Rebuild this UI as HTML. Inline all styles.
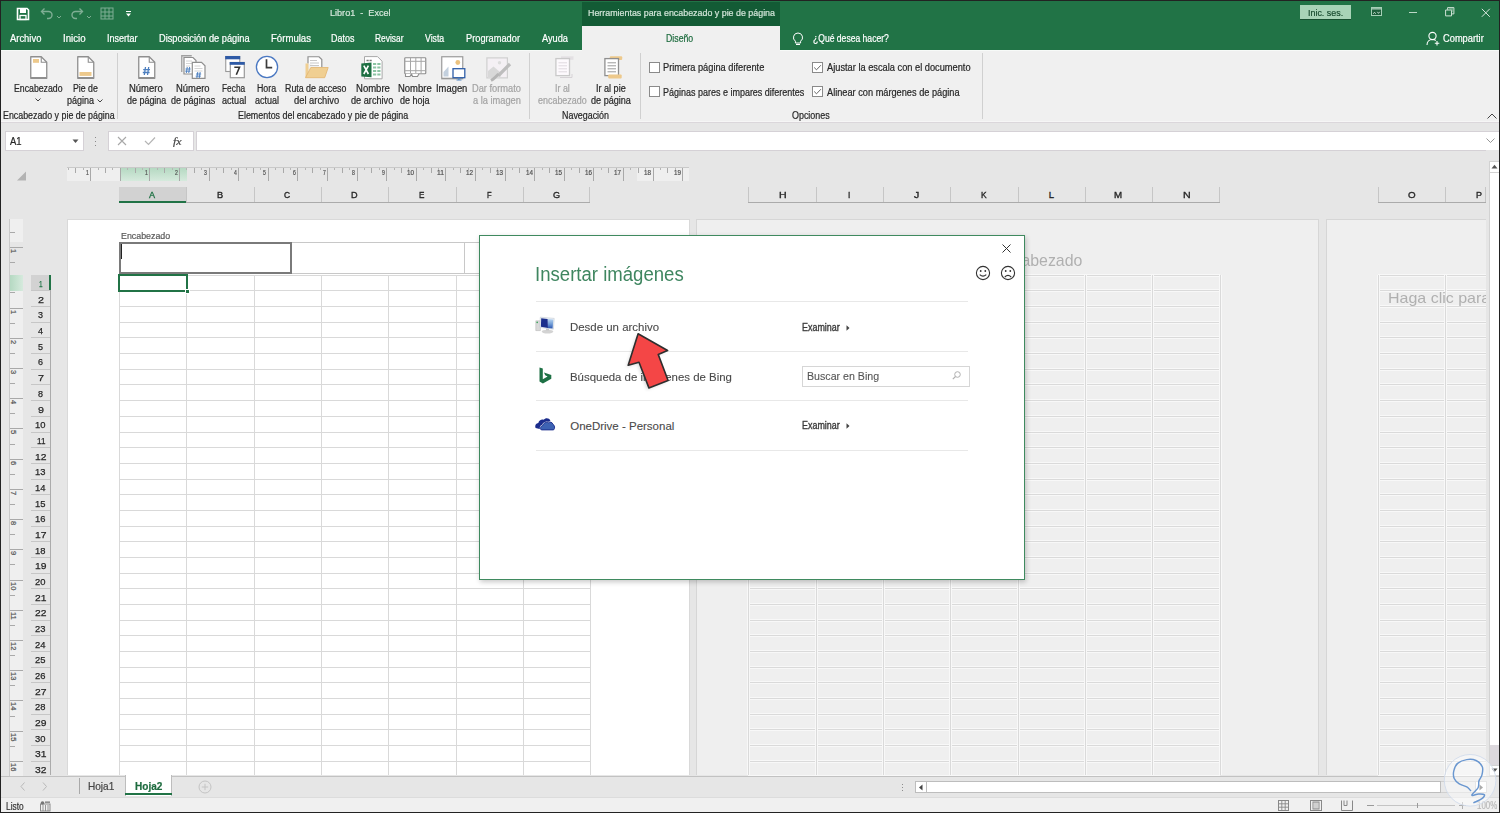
<!DOCTYPE html>
<html><head><meta charset="utf-8">
<style>

*{margin:0;padding:0;box-sizing:border-box}
html,body{width:1500px;height:813px;overflow:hidden;background:#e6e6e6}
#root{position:relative;width:1500px;height:813px;overflow:hidden;background:#e6e6e6;font-family:"Liberation Sans",sans-serif}
.a{position:absolute}
.t{position:absolute;white-space:nowrap;line-height:1;-webkit-text-stroke-width:0.2px}
svg.s{position:absolute;overflow:visible}

</style></head><body><div id="root">
<div class="a" style="left:0px;top:0px;width:1500px;height:50px;background:#217346;"></div>
<div class="a" style="left:582px;top:0px;width:198px;height:26px;background:#135b35;"></div>
<div class="a" style="left:582px;top:1px;width:198px;height:1px;background:#217346;"></div>
<div class="t" style="left:587.50px;top:8.20px;font-size:9.8px;color:#d3e6da;transform:scaleX(0.9059);transform-origin:0 0;">Herramientas para encabezado y pie de página</div>
<div class="t" style="left:329.60px;top:8.20px;font-size:9.8px;color:#d6e7dc;transform:scaleX(0.9269);transform-origin:0 0;white-space:pre;">Libro1  -  Excel</div>
<svg class="s" style="left:16px;top:7px;" width="14" height="14" viewBox="0 0 14 14"><path d="M1.5 1.5h9.5l1.5 1.5v9.5h-11z" fill="none" stroke="#fff" stroke-width="1.6"/><rect x="4" y="2" width="6" height="4" fill="#fff"/><rect x="4" y="8.5" width="6" height="4" fill="none" stroke="#fff" stroke-width="1.3"/></svg>
<svg class="s" style="left:40px;top:7px;" width="22" height="12" viewBox="0 0 22 12"><path d="M2 4.5h6.5a3.5 3.5 0 0 1 0 7H7" fill="none" stroke="#7fae94" stroke-width="1.4"/><path d="M4.5 1.5L1.5 4.5l3 3" fill="none" stroke="#7fae94" stroke-width="1.4"/><path d="M17 9l2 2 2-2" fill="none" stroke="#7fae94" stroke-width="1"/></svg>
<svg class="s" style="left:70px;top:7px;" width="22" height="12" viewBox="0 0 22 12"><path d="M12 4.5H5.5a3.5 3.5 0 0 0 0 7H7" fill="none" stroke="#7fae94" stroke-width="1.4"/><path d="M9.5 1.5l3 3-3 3" fill="none" stroke="#7fae94" stroke-width="1.4"/><path d="M17 9l2 2 2-2" fill="none" stroke="#7fae94" stroke-width="1"/></svg>
<svg class="s" style="left:100px;top:7px;" width="14" height="14" viewBox="0 0 14 14"><rect x="1" y="1" width="12" height="11" fill="none" stroke="#7fae94" stroke-width="1"/><path d="M1 5h12M1 9h12M5 1v11M9 1v11" stroke="#7fae94" stroke-width="1"/></svg>
<svg class="s" style="left:125px;top:10px;" width="8" height="8" viewBox="0 0 8 8"><rect x="1" y="1" width="5" height="1" fill="#fff"/><path d="M1 3.5h5l-2.5 3z" fill="#fff"/></svg>
<div class="a" style="left:1300px;top:5px;width:51px;height:14.5px;background:#a8d3b7;border-bottom:1px solid #184f30;"></div>
<div class="t" style="left:1308.00px;top:7.90px;font-size:9.8px;color:#174a2e;transform:scaleX(0.9095);transform-origin:0 0;">Inic. ses.</div>
<svg class="s" style="left:1371px;top:7px;" width="12" height="10" viewBox="0 0 12 10"><rect x="0.5" y="0.5" width="10" height="8" fill="#1d5e3a" stroke="#a6cfb6"/><rect x="1" y="1" width="9" height="1.6" fill="#96bfa8"/><path d="M2.3 6.8l1.2-1.6 1.2 1.6M6.3 4.8l1.2 1.6 1.2-1.6" fill="none" stroke="#c9e0d2" stroke-width="0.9"/></svg>
<div class="a" style="left:1409px;top:11.5px;width:8px;height:1.3px;background:#bcd8c7;"></div>
<svg class="s" style="left:1444.5px;top:7px;" width="10" height="10" viewBox="0 0 10 10"><path d="M0.6 3v5.9h5.9V3z" fill="none" stroke="#cfe2d6" stroke-width="1"/><path d="M2.6 2.8V0.6h6.3v6.3H6.6" fill="none" stroke="#cfe2d6" stroke-width="1"/><path d="M3.5 1l5 0 0 5z" fill="#8fbfa4" opacity="0.6"/></svg>
<svg class="s" style="left:1480.5px;top:7.5px;" width="10" height="10" viewBox="0 0 10 10"><path d="M0.8 0.8l8 8M8.8 0.8l-8 8" stroke="#d6e6dc" stroke-width="1"/></svg>
<div class="t" style="left:10.10px;top:33.64px;font-size:10px;color:#ffffff;transform:scaleX(0.9413);transform-origin:0 0;">Archivo</div>
<div class="t" style="left:63.00px;top:33.64px;font-size:10px;color:#ffffff;transform:scaleX(0.9671);transform-origin:0 0;">Inicio</div>
<div class="t" style="left:107.00px;top:33.64px;font-size:10px;color:#ffffff;transform:scaleX(0.8967);transform-origin:0 0;">Insertar</div>
<div class="t" style="left:159.00px;top:33.64px;font-size:10px;color:#ffffff;transform:scaleX(0.9259);transform-origin:0 0;">Disposición de página</div>
<div class="t" style="left:271.00px;top:33.64px;font-size:10px;color:#ffffff;transform:scaleX(0.9598);transform-origin:0 0;">Fórmulas</div>
<div class="t" style="left:330.60px;top:33.64px;font-size:10px;color:#ffffff;transform:scaleX(0.8958);transform-origin:0 0;">Datos</div>
<div class="t" style="left:375.00px;top:33.64px;font-size:10px;color:#ffffff;transform:scaleX(0.8390);transform-origin:0 0;">Revisar</div>
<div class="t" style="left:425.00px;top:33.64px;font-size:10px;color:#ffffff;transform:scaleX(0.8715);transform-origin:0 0;">Vista</div>
<div class="t" style="left:466.00px;top:33.64px;font-size:10px;color:#ffffff;transform:scaleX(0.9250);transform-origin:0 0;">Programador</div>
<div class="t" style="left:541.60px;top:33.64px;font-size:10px;color:#ffffff;transform:scaleX(0.9227);transform-origin:0 0;">Ayuda</div>
<div class="a" style="left:582px;top:26px;width:198px;height:25px;background:#f0f0f0;"></div>
<div class="t" style="left:666.40px;top:33.64px;font-size:10px;color:#1c6b3d;transform:scaleX(0.8743);transform-origin:0 0;">Diseño</div>
<svg class="s" style="left:792px;top:32px;" width="12" height="14" viewBox="0 0 12 14"><path d="M6 1a4.5 4.5 0 0 0-2.6 8.2V11h5.2V9.2A4.5 4.5 0 0 0 6 1z" fill="none" stroke="#fff" stroke-width="1"/><path d="M4 12.5h4" stroke="#fff"/></svg>
<div class="t" style="left:812.50px;top:33.64px;font-size:10px;color:#ffffff;transform:scaleX(0.8578);transform-origin:0 0;">¿Qué desea hacer?</div>
<svg class="s" style="left:1426px;top:31px;" width="14" height="15" viewBox="0 0 14 15"><circle cx="6.5" cy="5" r="3.6" fill="none" stroke="#fff" stroke-width="1.1"/><path d="M1 14c0-3.5 2.5-5.5 5.5-5.5 1.5 0 2.5.4 3.3 1" fill="none" stroke="#fff" stroke-width="1.1"/><path d="M11 10v4.5M8.8 12.2h4.5" stroke="#fff" stroke-width="1.1"/></svg>
<div class="t" style="left:1442.60px;top:33.73px;font-size:10px;color:#ffffff;transform:scaleX(0.9290);transform-origin:0 0;">Compartir</div>
<div class="a" style="left:0px;top:50px;width:1500px;height:72px;background:#f0f0f0;"></div>
<div class="a" style="left:0px;top:50px;width:582px;height:1px;background:#f7faf8;"></div>
<div class="a" style="left:780px;top:50px;width:720px;height:1px;background:#f7faf8;"></div>
<div class="a" style="left:0px;top:121px;width:1500px;height:1px;background:#f6f6f6;"></div>
<div class="a" style="left:0px;top:122px;width:1500px;height:1px;background:#dbd7db;"></div>
<div class="t" style="left:13.60px;top:83.73px;font-size:10px;color:#262626;transform:scaleX(0.8726);transform-origin:0 0;">Encabezado</div>
<svg class="s" style="left:35px;top:98px;" width="6" height="4" viewBox="0 0 6 4"><path d="M0.5 0.5l2.5 2.5 2.5-2.5" fill="none" stroke="#444" stroke-width="1"/></svg>
<div class="t" style="left:72.80px;top:83.73px;font-size:10px;color:#262626;transform:scaleX(0.8752);transform-origin:0 0;">Pie de</div>
<div class="t" style="left:67.00px;top:96.23px;font-size:10px;color:#262626;transform:scaleX(0.9026);transform-origin:0 0;">página</div>
<svg class="s" style="left:97px;top:99px;" width="6" height="4" viewBox="0 0 6 4"><path d="M0.5 0.5l2.5 2.5 2.5-2.5" fill="none" stroke="#444" stroke-width="1"/></svg>
<div class="t" style="left:3.00px;top:111.33px;font-size:10px;color:#262626;transform:scaleX(0.8843);transform-origin:0 0;">Encabezado y pie de página</div>
<div class="a" style="left:117px;top:53px;width:1px;height:66px;background:#d0d0d0;"></div>
<div class="t" style="left:129.30px;top:83.73px;font-size:10px;color:#262626;transform:scaleX(0.9471);transform-origin:0 0;">Número</div>
<div class="t" style="left:126.50px;top:96.23px;font-size:10px;color:#262626;transform:scaleX(0.8948);transform-origin:0 0;">de página</div>
<div class="t" style="left:176.40px;top:83.73px;font-size:10px;color:#262626;transform:scaleX(0.9443);transform-origin:0 0;">Número</div>
<div class="t" style="left:171.00px;top:96.23px;font-size:10px;color:#262626;transform:scaleX(0.9033);transform-origin:0 0;">de páginas</div>
<div class="t" style="left:222.00px;top:83.73px;font-size:10px;color:#262626;transform:scaleX(0.8324);transform-origin:0 0;">Fecha</div>
<div class="t" style="left:222.00px;top:96.23px;font-size:10px;color:#262626;transform:scaleX(0.9069);transform-origin:0 0;">actual</div>
<div class="t" style="left:257.20px;top:83.73px;font-size:10px;color:#262626;transform:scaleX(0.8818);transform-origin:0 0;">Hora</div>
<div class="t" style="left:255.20px;top:96.23px;font-size:10px;color:#262626;transform:scaleX(0.8994);transform-origin:0 0;">actual</div>
<div class="t" style="left:285.10px;top:83.73px;font-size:10px;color:#262626;transform:scaleX(0.8838);transform-origin:0 0;">Ruta de acceso</div>
<div class="t" style="left:293.60px;top:96.23px;font-size:10px;color:#262626;transform:scaleX(0.9345);transform-origin:0 0;">del archivo</div>
<div class="t" style="left:355.70px;top:83.73px;font-size:10px;color:#262626;transform:scaleX(0.9526);transform-origin:0 0;">Nombre</div>
<div class="t" style="left:350.90px;top:96.23px;font-size:10px;color:#262626;transform:scaleX(0.9168);transform-origin:0 0;">de archivo</div>
<div class="t" style="left:397.90px;top:83.73px;font-size:10px;color:#262626;transform:scaleX(0.9471);transform-origin:0 0;">Nombre</div>
<div class="t" style="left:400.20px;top:96.23px;font-size:10px;color:#262626;transform:scaleX(0.9024);transform-origin:0 0;">de hoja</div>
<div class="t" style="left:436.20px;top:83.73px;font-size:10px;color:#262626;transform:scaleX(0.9392);transform-origin:0 0;">Imagen</div>
<div class="t" style="left:471.80px;top:83.73px;font-size:10px;color:#a3a3a3;transform:scaleX(0.9280);transform-origin:0 0;">Dar formato</div>
<div class="t" style="left:472.80px;top:96.23px;font-size:10px;color:#a3a3a3;transform:scaleX(0.9269);transform-origin:0 0;">a la imagen</div>
<div class="t" style="left:238.40px;top:111.33px;font-size:10px;color:#262626;transform:scaleX(0.8900);transform-origin:0 0;">Elementos del encabezado y pie de página</div>
<div class="a" style="left:529px;top:53px;width:1px;height:66px;background:#d0d0d0;"></div>
<div class="t" style="left:555.40px;top:83.73px;font-size:10px;color:#a3a3a3;transform:scaleX(0.8876);transform-origin:0 0;">Ir al</div>
<div class="t" style="left:537.80px;top:96.23px;font-size:10px;color:#a3a3a3;transform:scaleX(0.8939);transform-origin:0 0;">encabezado</div>
<div class="t" style="left:596.40px;top:83.73px;font-size:10px;color:#262626;transform:scaleX(0.9058);transform-origin:0 0;">Ir al pie</div>
<div class="t" style="left:591.30px;top:96.23px;font-size:10px;color:#262626;transform:scaleX(0.9083);transform-origin:0 0;">de página</div>
<div class="t" style="left:561.70px;top:111.33px;font-size:10px;color:#262626;transform:scaleX(0.8899);transform-origin:0 0;">Navegación</div>
<div class="a" style="left:639.5px;top:53px;width:1px;height:66px;background:#d0d0d0;"></div>
<svg class="s" style="left:649px;top:62px;" width="11" height="11" viewBox="0 0 11 11"><rect x="0.5" y="0.5" width="10" height="10" fill="#fff" stroke="#8a8a8a"/></svg>
<svg class="s" style="left:649px;top:86px;" width="11" height="11" viewBox="0 0 11 11"><rect x="0.5" y="0.5" width="10" height="10" fill="#fff" stroke="#8a8a8a"/></svg>
<svg class="s" style="left:812px;top:62px;" width="11" height="11" viewBox="0 0 11 11"><rect x="0.5" y="0.5" width="10" height="10" fill="#fff" stroke="#8a8a8a"/><path d="M2.2 5.5l2.3 2.3 4.4-4.6" fill="none" stroke="#555" stroke-width="0.9"/></svg>
<svg class="s" style="left:812px;top:86px;" width="11" height="11" viewBox="0 0 11 11"><rect x="0.5" y="0.5" width="10" height="10" fill="#fff" stroke="#8a8a8a"/><path d="M2.2 5.5l2.3 2.3 4.4-4.6" fill="none" stroke="#555" stroke-width="0.9"/></svg>
<div class="t" style="left:663.40px;top:63.44px;font-size:10px;color:#262626;transform:scaleX(0.9250);transform-origin:0 0;">Primera página diferente</div>
<div class="t" style="left:663.40px;top:87.63px;font-size:10px;color:#262626;transform:scaleX(0.8982);transform-origin:0 0;">Páginas pares e impares diferentes</div>
<div class="t" style="left:826.70px;top:63.44px;font-size:10px;color:#262626;transform:scaleX(0.9259);transform-origin:0 0;">Ajustar la escala con el documento</div>
<div class="t" style="left:826.70px;top:87.83px;font-size:10px;color:#262626;transform:scaleX(0.9209);transform-origin:0 0;">Alinear con márgenes de página</div>
<div class="t" style="left:791.90px;top:111.33px;font-size:10px;color:#262626;transform:scaleX(0.8924);transform-origin:0 0;">Opciones</div>
<div class="a" style="left:982px;top:53px;width:1px;height:66px;background:#d0d0d0;"></div>
<svg class="s" style="left:1487px;top:113px;" width="10" height="6" viewBox="0 0 10 6"><path d="M0.5 5.5l4.5-4.5 4.5 4.5" fill="none" stroke="#444" stroke-width="1"/></svg>
<svg class="s" style="left:30px;top:56px;" width="18" height="23" viewBox="0 0 18 23"><path d="M0.75 0.75h10.5l5.5 5.5v16.0h-16z" fill="#fff" stroke="#8f8f8f" stroke-width="1.3" stroke-linejoin="round"/><path d="M11.25 0.75v5.5h5.5" fill="none" stroke="#8f8f8f" stroke-width="1.1"/><rect x="1" y="21" width="15.5" height="1.2" fill="#8f8f8f"/><rect x="3" y="3" width="6" height="3.8" fill="#edc98c"/></svg>
<svg class="s" style="left:76.5px;top:56px;" width="18" height="23" viewBox="0 0 18 23"><path d="M0.75 0.75h10.5l5.5 5.5v16.0h-16z" fill="#fff" stroke="#8f8f8f" stroke-width="1.3" stroke-linejoin="round"/><path d="M11.25 0.75v5.5h5.5" fill="none" stroke="#8f8f8f" stroke-width="1.1"/><rect x="1" y="21" width="15.5" height="1.2" fill="#8f8f8f"/><rect x="2.5" y="16" width="12" height="3.9" fill="#edc98c"/></svg>
<svg class="s" style="left:137.5px;top:56px;" width="18" height="23" viewBox="0 0 18 23"><path d="M0.75 0.75h10.5l5.5 5.5v16.0h-16z" fill="#fff" stroke="#8f8f8f" stroke-width="1.3" stroke-linejoin="round"/><path d="M11.25 0.75v5.5h5.5" fill="none" stroke="#8f8f8f" stroke-width="1.1"/><rect x="1" y="21" width="15.5" height="1.2" fill="#8f8f8f"/><g transform="translate(8.5 15) scale(1.0)" stroke="#4d7fbf" stroke-width="1.3" fill="none"><path d="M-1 -4L-2.2 4M2.2 -4L1 4M-3.3 -1.3H3.5M-3.7 1.5H3.1"/></g></svg>
<svg class="s" style="left:181px;top:55px;" width="25" height="24" viewBox="0 0 25 24"><path d="M0.75 17V0.75h10" fill="none" stroke="#a0a0a0" stroke-width="1.3"/>
<path d="M3 2.5h9l3 3v13.5h-12z" fill="#fff" stroke="#8f8f8f" stroke-width="1.2"/>
<path d="M5 6h6M5 8.5h6M5 11h4" stroke="#c9c9c9" stroke-width="0.8"/><g transform="translate(7 15) scale(0.75)" stroke="#4d7fbf" stroke-width="1.3" fill="none"><path d="M-1 -4L-2.2 4M2.2 -4L1 4M-3.3 -1.3H3.5M-3.7 1.5H3.1"/></g>
<path d="M11.3 7.3h9.2l3.5 3.5v12.5h-12.7z" fill="#fff" stroke="#8f8f8f" stroke-width="1.2"/>
<path d="M13.5 11h6M13.5 13.5h8M13.5 16h8" stroke="#c9c9c9" stroke-width="0.8"/><g transform="translate(17.5 20) scale(0.75)" stroke="#4d7fbf" stroke-width="1.3" fill="none"><path d="M-1 -4L-2.2 4M2.2 -4L1 4M-3.3 -1.3H3.5M-3.7 1.5H3.1"/></g></svg>
<svg class="s" style="left:224.5px;top:56px;" width="20" height="22.5" viewBox="0 0 20 22.5"><rect x="0.75" y="0.5" width="14" height="15" fill="#fff" stroke="#9a9a9a" stroke-width="1.1"/><rect x="0.2" y="0" width="15" height="3.3" fill="#2e5aa6"/>
<rect x="5.3" y="6.5" width="14" height="15.2" fill="#fff" stroke="#9a9a9a" stroke-width="1.2"/><rect x="4.7" y="6" width="15" height="2.8" fill="#2e5aa6"/>
<path d="M9.3 11.3h5.2l-3.2 7.5" fill="none" stroke="#333" stroke-width="1.6"/></svg>
<svg class="s" style="left:255px;top:55px;" width="24" height="24" viewBox="0 0 24 24"><circle cx="12" cy="12" r="10.6" fill="#fff" stroke="#4a78c2" stroke-width="1.3"/><path d="M11.5 4.3v8.4h5.7" fill="none" stroke="#3c3c3c" stroke-width="1.7"/></svg>
<svg class="s" style="left:305px;top:55.5px;" width="24" height="23" viewBox="0 0 24 23"><path d="M3 7.5V0.75h11l2.8 2.8V11" fill="#fff" stroke="#8f8f8f" stroke-width="1.2"/>
<path d="M5 4.5h7M5 7h9M5 9.5h9" stroke="#c8c8c8" stroke-width="1"/>
<path d="M0.5 7.5h3v14H0.5z" fill="#f0cf92"/>
<path d="M5.8 11.5H23.2L19.7 21.7H0.5z" fill="#f0cf92" stroke="#e2b46f" stroke-width="0.8"/></svg>
<svg class="s" style="left:360.5px;top:55.5px;" width="22" height="24" viewBox="0 0 22 24"><path d="M3.5 0.6h13l4.6 4.6v17.6H3.5z" fill="#fff" stroke="#a8a8a8" stroke-width="1"/>
<path d="M5.5 4.5h2.2M8.5 4.5h2.2" stroke="#777" stroke-width="1.3"/>
<g fill="#8cc4a3"><rect x="12" y="7" width="3.2" height="2"/><rect x="16.3" y="7" width="3.2" height="2"/><rect x="12" y="10.5" width="3.2" height="2"/><rect x="16.3" y="10.5" width="3.2" height="2"/><rect x="12" y="14" width="3.2" height="2"/><rect x="16.3" y="14" width="3.2" height="2"/><rect x="12" y="17.5" width="3.2" height="2"/><rect x="16.3" y="17.5" width="3.2" height="2"/></g>
<path d="M0.3 7.6L10.5 6.5v14.8L0.3 20.5z" fill="#1d6f42"/>
<path d="M2.8 9.7l4.6 8.3M7.4 9.7l-4.6 8.3" stroke="#fff" stroke-width="1.6"/></svg>
<svg class="s" style="left:403.5px;top:56.5px;" width="23" height="21" viewBox="0 0 23 21"><rect x="0.75" y="0.75" width="21" height="16" fill="#fff" stroke="#8f8f8f" stroke-width="1.2" rx="0.8"/>
<path d="M0.75 4.3h21M0.75 13.7h21M6.5 0.75v16M11.8 0.75v16M17.1 0.75v16" stroke="#a6a6a6" stroke-width="1"/>
<path d="M1.5 16.7v2.8h4.5l1.5-2.8M7.5 16.7l1 2.8h5l1.5-2.8" fill="#fff" stroke="#8f8f8f" stroke-width="1.1"/></svg>
<svg class="s" style="left:440.5px;top:55.5px;" width="25" height="26" viewBox="0 0 25 26"><rect x="0.75" y="0.75" width="21" height="22" fill="#fff" stroke="#9a9a9a" stroke-width="1.2"/><rect x="1" y="21.7" width="21" height="1.3" fill="#999"/>
<circle cx="16.8" cy="6.5" r="2.4" fill="#ebc27f"/>
<path d="M2.5 20.5V16l5-5.5 0 10z" fill="#c3d0de"/>
<rect x="12" y="12.7" width="11.8" height="9" fill="#fff" stroke="#2f5ea8" stroke-width="1.3"/>
<path d="M17.9 21.7v2M15.5 24h5" stroke="#4f86c6" stroke-width="1.2"/></svg>
<svg class="s" style="left:485.5px;top:56.5px;" width="25" height="25" viewBox="0 0 25 25"><rect x="0.9" y="0.9" width="20.5" height="20" fill="#f4f0f4" stroke="#cfcfcf" stroke-width="1.2"/>
<circle cx="13.5" cy="5.8" r="1.7" fill="#dcdcdc"/>
<path d="M2 20V14l5.5-4.5 7 6v4.5z" fill="#d8d8d8"/>
<path d="M24 7L12.5 18.5" stroke="#bdbdbd" stroke-width="3.2"/>
<path d="M12.5 17l-3.5 3.5c-1.5 1.5-3 2.5-4 3" stroke="#b5b5b5" stroke-width="3"/></svg>
<svg class="s" style="left:555px;top:56px;" width="19" height="23" viewBox="0 0 19 23"><rect x="6" y="0.3" width="12.5" height="3.5" fill="#e3e0e3"/>
<rect x="0.9" y="2.6" width="13.6" height="17" fill="#fdfafd" stroke="#c9c9c9" stroke-width="1.3"/>
<path d="M3.5 6.8h8.5M3.5 9.8h8.5M3.5 12.8h8.5M3.5 15.8h8.5" stroke="#dcd6dc" stroke-width="0.9"/>
<path d="M5 21.5h12V18" fill="none" stroke="#d6d2d6" stroke-width="1"/></svg>
<svg class="s" style="left:603.5px;top:56px;" width="19" height="23" viewBox="0 0 19 23"><rect x="5.8" y="0.3" width="12.4" height="3.6" rx="1" fill="#edc98c"/>
<rect x="0.9" y="2.6" width="13.6" height="17" fill="#fff" stroke="#8f8f8f" stroke-width="1.3"/>
<path d="M3.5 6.8h8.5M3.5 9.8h8.5M3.5 12.8h8.5M3.5 15.8h8.5" stroke="#8f8f8f" stroke-width="0.9"/>
<rect x="4.2" y="18.5" width="13.5" height="4" rx="1" fill="#edc98c"/></svg>
<div class="a" style="left:4.5px;top:131px;width:79px;height:20px;background:#fff;border:1px solid #d5d1d6;"></div>
<div class="t" style="left:9.50px;top:137.03px;font-size:10px;color:#262626;transform:scaleX(0.9471);transform-origin:0 0;">A1</div>
<svg class="s" style="left:72px;top:139px;" width="8" height="5" viewBox="0 0 8 5"><path d="M0.5 0.5h6l-3 3.5z" fill="#555"/></svg>
<div class="a" style="left:95px;top:137px;width:1.2px;height:1.2px;background:#8a8a8a;"></div>
<div class="a" style="left:95px;top:141px;width:1.2px;height:1.2px;background:#8a8a8a;"></div>
<div class="a" style="left:95px;top:145px;width:1.2px;height:1.2px;background:#8a8a8a;"></div>
<div class="a" style="left:107.5px;top:131px;width:86px;height:20px;background:#fff;border:1px solid #d5d1d6;"></div>
<svg class="s" style="left:117px;top:136px;" width="10" height="10" viewBox="0 0 10 10"><path d="M1 1l8 8M9 1l-8 8" stroke="#a8a8a8" stroke-width="1.1"/></svg>
<svg class="s" style="left:144px;top:136px;" width="12" height="10" viewBox="0 0 12 10"><path d="M1 5l3.5 3.5L11 1.5" fill="none" stroke="#b5b5b5" stroke-width="1.2"/></svg>
<div class="t" style="left:173.00px;top:136.19px;font-size:11px;color:#444;font-family:'Liberation Serif',serif;transform:scaleX(1.0866);transform-origin:0 0;font-style:italic;">fx</div>
<div class="a" style="left:196px;top:131px;width:1304px;height:20px;background:#fff;border:1px solid #d5d1d6;border-right:none;"></div>
<svg class="s" style="left:1486px;top:138px;" width="9" height="6" viewBox="0 0 9 6"><path d="M0.5 0.5l4 4 4-4" fill="none" stroke="#8a8a8a" stroke-width="0.9"/></svg>
<div class="a" style="left:67.3px;top:167px;width:621.4px;height:14px;background:#e6e6e6;"></div>
<div class="a" style="left:67.3px;top:168px;width:52.3px;height:13px;background:#efefef;"></div>
<div class="a" style="left:636.7px;top:168px;width:52px;height:13px;background:#efefef;"></div>
<div class="a" style="left:119.6px;top:168px;width:67.4px;height:13px;background:linear-gradient(#b5d9c2,#d6eadd)"></div>
<div class="a" style="left:67.3px;top:167px;width:621.4px;height:1px;background:#c9c9c9;"></div>
<div class="a" style="left:75.4px;top:168px;width:1px;height:5px;background:#a9a9a9"></div><div class="a" style="left:68.0px;top:168px;width:1px;height:1.5px;background:#b5b5b5"></div><div class="a" style="left:82.8px;top:168px;width:1px;height:1.5px;background:#b5b5b5"></div><div class="a" style="left:90.2px;top:168px;width:1px;height:13px;background:#a9a9a9"></div><div class="a" style="left:105.0px;top:168px;width:1px;height:5px;background:#a9a9a9"></div><div class="a" style="left:97.6px;top:168px;width:1px;height:1.5px;background:#b5b5b5"></div><div class="a" style="left:112.4px;top:168px;width:1px;height:1.5px;background:#b5b5b5"></div><div class="a" style="left:119.8px;top:168px;width:1px;height:13px;background:#a9a9a9"></div><div class="a" style="left:134.6px;top:168px;width:1px;height:5px;background:#a9a9a9"></div><div class="a" style="left:127.2px;top:168px;width:1px;height:1.5px;background:#b5b5b5"></div><div class="a" style="left:142.0px;top:168px;width:1px;height:1.5px;background:#b5b5b5"></div><div class="a" style="left:149.4px;top:168px;width:1px;height:13px;background:#a9a9a9"></div><div class="a" style="left:164.2px;top:168px;width:1px;height:5px;background:#a9a9a9"></div><div class="a" style="left:156.8px;top:168px;width:1px;height:1.5px;background:#b5b5b5"></div><div class="a" style="left:171.6px;top:168px;width:1px;height:1.5px;background:#b5b5b5"></div><div class="a" style="left:179.0px;top:168px;width:1px;height:13px;background:#a9a9a9"></div><div class="a" style="left:193.8px;top:168px;width:1px;height:5px;background:#a9a9a9"></div><div class="a" style="left:186.4px;top:168px;width:1px;height:1.5px;background:#b5b5b5"></div><div class="a" style="left:201.2px;top:168px;width:1px;height:1.5px;background:#b5b5b5"></div><div class="a" style="left:208.6px;top:168px;width:1px;height:13px;background:#a9a9a9"></div><div class="a" style="left:223.4px;top:168px;width:1px;height:5px;background:#a9a9a9"></div><div class="a" style="left:216.0px;top:168px;width:1px;height:1.5px;background:#b5b5b5"></div><div class="a" style="left:230.8px;top:168px;width:1px;height:1.5px;background:#b5b5b5"></div><div class="a" style="left:238.2px;top:168px;width:1px;height:13px;background:#a9a9a9"></div><div class="a" style="left:253.0px;top:168px;width:1px;height:5px;background:#a9a9a9"></div><div class="a" style="left:245.6px;top:168px;width:1px;height:1.5px;background:#b5b5b5"></div><div class="a" style="left:260.4px;top:168px;width:1px;height:1.5px;background:#b5b5b5"></div><div class="a" style="left:267.8px;top:168px;width:1px;height:13px;background:#a9a9a9"></div><div class="a" style="left:282.6px;top:168px;width:1px;height:5px;background:#a9a9a9"></div><div class="a" style="left:275.2px;top:168px;width:1px;height:1.5px;background:#b5b5b5"></div><div class="a" style="left:290.0px;top:168px;width:1px;height:1.5px;background:#b5b5b5"></div><div class="a" style="left:297.4px;top:168px;width:1px;height:13px;background:#a9a9a9"></div><div class="a" style="left:312.2px;top:168px;width:1px;height:5px;background:#a9a9a9"></div><div class="a" style="left:304.8px;top:168px;width:1px;height:1.5px;background:#b5b5b5"></div><div class="a" style="left:319.6px;top:168px;width:1px;height:1.5px;background:#b5b5b5"></div><div class="a" style="left:327.0px;top:168px;width:1px;height:13px;background:#a9a9a9"></div><div class="a" style="left:341.8px;top:168px;width:1px;height:5px;background:#a9a9a9"></div><div class="a" style="left:334.4px;top:168px;width:1px;height:1.5px;background:#b5b5b5"></div><div class="a" style="left:349.2px;top:168px;width:1px;height:1.5px;background:#b5b5b5"></div><div class="a" style="left:356.6px;top:168px;width:1px;height:13px;background:#a9a9a9"></div><div class="a" style="left:371.4px;top:168px;width:1px;height:5px;background:#a9a9a9"></div><div class="a" style="left:364.0px;top:168px;width:1px;height:1.5px;background:#b5b5b5"></div><div class="a" style="left:378.8px;top:168px;width:1px;height:1.5px;background:#b5b5b5"></div><div class="a" style="left:386.2px;top:168px;width:1px;height:13px;background:#a9a9a9"></div><div class="a" style="left:401.0px;top:168px;width:1px;height:5px;background:#a9a9a9"></div><div class="a" style="left:393.6px;top:168px;width:1px;height:1.5px;background:#b5b5b5"></div><div class="a" style="left:408.4px;top:168px;width:1px;height:1.5px;background:#b5b5b5"></div><div class="a" style="left:415.8px;top:168px;width:1px;height:13px;background:#a9a9a9"></div><div class="a" style="left:430.6px;top:168px;width:1px;height:5px;background:#a9a9a9"></div><div class="a" style="left:423.2px;top:168px;width:1px;height:1.5px;background:#b5b5b5"></div><div class="a" style="left:438.0px;top:168px;width:1px;height:1.5px;background:#b5b5b5"></div><div class="a" style="left:445.4px;top:168px;width:1px;height:13px;background:#a9a9a9"></div><div class="a" style="left:460.2px;top:168px;width:1px;height:5px;background:#a9a9a9"></div><div class="a" style="left:452.8px;top:168px;width:1px;height:1.5px;background:#b5b5b5"></div><div class="a" style="left:467.6px;top:168px;width:1px;height:1.5px;background:#b5b5b5"></div><div class="a" style="left:475.0px;top:168px;width:1px;height:13px;background:#a9a9a9"></div><div class="a" style="left:489.8px;top:168px;width:1px;height:5px;background:#a9a9a9"></div><div class="a" style="left:482.4px;top:168px;width:1px;height:1.5px;background:#b5b5b5"></div><div class="a" style="left:497.2px;top:168px;width:1px;height:1.5px;background:#b5b5b5"></div><div class="a" style="left:504.6px;top:168px;width:1px;height:13px;background:#a9a9a9"></div><div class="a" style="left:519.4px;top:168px;width:1px;height:5px;background:#a9a9a9"></div><div class="a" style="left:512.0px;top:168px;width:1px;height:1.5px;background:#b5b5b5"></div><div class="a" style="left:526.8px;top:168px;width:1px;height:1.5px;background:#b5b5b5"></div><div class="a" style="left:534.2px;top:168px;width:1px;height:13px;background:#a9a9a9"></div><div class="a" style="left:549.0px;top:168px;width:1px;height:5px;background:#a9a9a9"></div><div class="a" style="left:541.6px;top:168px;width:1px;height:1.5px;background:#b5b5b5"></div><div class="a" style="left:556.4px;top:168px;width:1px;height:1.5px;background:#b5b5b5"></div><div class="a" style="left:563.8px;top:168px;width:1px;height:13px;background:#a9a9a9"></div><div class="a" style="left:578.6px;top:168px;width:1px;height:5px;background:#a9a9a9"></div><div class="a" style="left:571.2px;top:168px;width:1px;height:1.5px;background:#b5b5b5"></div><div class="a" style="left:586.0px;top:168px;width:1px;height:1.5px;background:#b5b5b5"></div><div class="a" style="left:593.4px;top:168px;width:1px;height:13px;background:#a9a9a9"></div><div class="a" style="left:608.2px;top:168px;width:1px;height:5px;background:#a9a9a9"></div><div class="a" style="left:600.8px;top:168px;width:1px;height:1.5px;background:#b5b5b5"></div><div class="a" style="left:615.6px;top:168px;width:1px;height:1.5px;background:#b5b5b5"></div><div class="a" style="left:623.0px;top:168px;width:1px;height:13px;background:#a9a9a9"></div><div class="a" style="left:637.8px;top:168px;width:1px;height:5px;background:#a9a9a9"></div><div class="a" style="left:630.4px;top:168px;width:1px;height:1.5px;background:#b5b5b5"></div><div class="a" style="left:645.2px;top:168px;width:1px;height:1.5px;background:#b5b5b5"></div><div class="a" style="left:652.6px;top:168px;width:1px;height:13px;background:#a9a9a9"></div><div class="a" style="left:667.4px;top:168px;width:1px;height:5px;background:#a9a9a9"></div><div class="a" style="left:660.0px;top:168px;width:1px;height:1.5px;background:#b5b5b5"></div><div class="a" style="left:674.8px;top:168px;width:1px;height:1.5px;background:#b5b5b5"></div><div class="a" style="left:682.2px;top:168px;width:1px;height:13px;background:#a9a9a9"></div>
<div class="t" style="left:85.70px;top:169.74px;font-size:6.8px;color:#505050;transform:scaleX(0.7500);transform-origin:0 0;">1</div>
<div class="t" style="left:144.90px;top:169.74px;font-size:6.8px;color:#505050;transform:scaleX(0.7500);transform-origin:0 0;">1</div>
<div class="t" style="left:174.50px;top:169.74px;font-size:6.8px;color:#505050;transform:scaleX(0.7500);transform-origin:0 0;">2</div>
<div class="t" style="left:204.10px;top:169.74px;font-size:6.8px;color:#505050;transform:scaleX(0.7500);transform-origin:0 0;">3</div>
<div class="t" style="left:233.70px;top:169.74px;font-size:6.8px;color:#505050;transform:scaleX(0.7500);transform-origin:0 0;">4</div>
<div class="t" style="left:263.30px;top:169.74px;font-size:6.8px;color:#505050;transform:scaleX(0.7500);transform-origin:0 0;">5</div>
<div class="t" style="left:292.90px;top:169.74px;font-size:6.8px;color:#505050;transform:scaleX(0.7500);transform-origin:0 0;">6</div>
<div class="t" style="left:322.50px;top:169.74px;font-size:6.8px;color:#505050;transform:scaleX(0.7500);transform-origin:0 0;">7</div>
<div class="t" style="left:352.10px;top:169.74px;font-size:6.8px;color:#505050;transform:scaleX(0.7500);transform-origin:0 0;">8</div>
<div class="t" style="left:381.70px;top:169.74px;font-size:6.8px;color:#505050;transform:scaleX(0.7500);transform-origin:0 0;">9</div>
<div class="t" style="left:407.10px;top:169.74px;font-size:6.8px;color:#505050;transform:scaleX(0.9254);transform-origin:0 0;">10</div>
<div class="t" style="left:436.70px;top:169.74px;font-size:6.8px;color:#505050;transform:scaleX(0.9896);transform-origin:0 0;">11</div>
<div class="t" style="left:466.30px;top:169.74px;font-size:6.8px;color:#505050;transform:scaleX(0.9254);transform-origin:0 0;">12</div>
<div class="t" style="left:495.90px;top:169.74px;font-size:6.8px;color:#505050;transform:scaleX(0.9254);transform-origin:0 0;">13</div>
<div class="t" style="left:525.50px;top:169.74px;font-size:6.8px;color:#505050;transform:scaleX(0.9254);transform-origin:0 0;">14</div>
<div class="t" style="left:555.10px;top:169.74px;font-size:6.8px;color:#505050;transform:scaleX(0.9254);transform-origin:0 0;">15</div>
<div class="t" style="left:584.70px;top:169.74px;font-size:6.8px;color:#505050;transform:scaleX(0.9254);transform-origin:0 0;">16</div>
<div class="t" style="left:614.30px;top:169.74px;font-size:6.8px;color:#505050;transform:scaleX(0.9254);transform-origin:0 0;">17</div>
<div class="t" style="left:643.90px;top:169.74px;font-size:6.8px;color:#505050;transform:scaleX(0.9254);transform-origin:0 0;">18</div>
<div class="t" style="left:673.50px;top:169.74px;font-size:6.8px;color:#505050;transform:scaleX(0.9254);transform-origin:0 0;">19</div>
<svg class="s" style="left:16px;top:171px;" width="11" height="10" viewBox="0 0 11 10"><path d="M10 0.5V9.5H1z" fill="#b3b3b3"/></svg>
<div class="a" style="left:8.6px;top:219px;width:14.700000000000001px;height:557px;background:#efefef;border-left:1px solid #c9c9c9;"></div>
<div class="a" style="left:9.6px;top:241.5px;width:13.700000000000001px;height:33.3px;background:#e6e6e6;"></div>
<div class="a" style="left:9.6px;top:275px;width:13.7px;height:16px;background:linear-gradient(90deg,#b5d9c2,#d6eadd)"></div>
<div class="a" style="left:9.6px;top:232.0px;width:5px;height:1px;background:#a9a9a9"></div><div class="a" style="left:9.6px;top:247.1px;width:13px;height:1px;background:#a9a9a9"></div><div class="a" style="left:9.6px;top:262.2px;width:5px;height:1px;background:#a9a9a9"></div><div class="a" style="left:9.6px;top:292.4px;width:5px;height:1px;background:#a9a9a9"></div><div class="a" style="left:9.6px;top:307.5px;width:13px;height:1px;background:#a9a9a9"></div><div class="a" style="left:9.6px;top:322.6px;width:5px;height:1px;background:#a9a9a9"></div><div class="a" style="left:9.6px;top:337.7px;width:13px;height:1px;background:#a9a9a9"></div><div class="a" style="left:9.6px;top:352.9px;width:5px;height:1px;background:#a9a9a9"></div><div class="a" style="left:9.6px;top:368.0px;width:13px;height:1px;background:#a9a9a9"></div><div class="a" style="left:9.6px;top:383.1px;width:5px;height:1px;background:#a9a9a9"></div><div class="a" style="left:9.6px;top:398.2px;width:13px;height:1px;background:#a9a9a9"></div><div class="a" style="left:9.6px;top:413.3px;width:5px;height:1px;background:#a9a9a9"></div><div class="a" style="left:9.6px;top:428.4px;width:13px;height:1px;background:#a9a9a9"></div><div class="a" style="left:9.6px;top:443.5px;width:5px;height:1px;background:#a9a9a9"></div><div class="a" style="left:9.6px;top:458.6px;width:13px;height:1px;background:#a9a9a9"></div><div class="a" style="left:9.6px;top:473.7px;width:5px;height:1px;background:#a9a9a9"></div><div class="a" style="left:9.6px;top:488.8px;width:13px;height:1px;background:#a9a9a9"></div><div class="a" style="left:9.6px;top:504.0px;width:5px;height:1px;background:#a9a9a9"></div><div class="a" style="left:9.6px;top:519.1px;width:13px;height:1px;background:#a9a9a9"></div><div class="a" style="left:9.6px;top:534.2px;width:5px;height:1px;background:#a9a9a9"></div><div class="a" style="left:9.6px;top:549.3px;width:13px;height:1px;background:#a9a9a9"></div><div class="a" style="left:9.6px;top:564.4px;width:5px;height:1px;background:#a9a9a9"></div><div class="a" style="left:9.6px;top:579.5px;width:13px;height:1px;background:#a9a9a9"></div><div class="a" style="left:9.6px;top:594.6px;width:5px;height:1px;background:#a9a9a9"></div><div class="a" style="left:9.6px;top:609.7px;width:13px;height:1px;background:#a9a9a9"></div><div class="a" style="left:9.6px;top:624.8px;width:5px;height:1px;background:#a9a9a9"></div><div class="a" style="left:9.6px;top:639.9px;width:13px;height:1px;background:#a9a9a9"></div><div class="a" style="left:9.6px;top:655.1px;width:5px;height:1px;background:#a9a9a9"></div><div class="a" style="left:9.6px;top:670.2px;width:13px;height:1px;background:#a9a9a9"></div><div class="a" style="left:9.6px;top:685.3px;width:5px;height:1px;background:#a9a9a9"></div><div class="a" style="left:9.6px;top:700.4px;width:13px;height:1px;background:#a9a9a9"></div><div class="a" style="left:9.6px;top:715.5px;width:5px;height:1px;background:#a9a9a9"></div><div class="a" style="left:9.6px;top:730.6px;width:13px;height:1px;background:#a9a9a9"></div><div class="a" style="left:9.6px;top:745.7px;width:5px;height:1px;background:#a9a9a9"></div><div class="a" style="left:9.6px;top:760.8px;width:13px;height:1px;background:#a9a9a9"></div><div class="a" style="left:9.6px;top:775.9px;width:5px;height:1px;background:#a9a9a9"></div>
<div class="t" style="left:17px;top:249.1px;font-size:7.5px;color:#555;transform:rotate(90deg);transform-origin:0 0;">1</div>
<div class="t" style="left:17px;top:309.5px;font-size:7.5px;color:#555;transform:rotate(90deg);transform-origin:0 0;">1</div>
<div class="t" style="left:17px;top:339.7px;font-size:7.5px;color:#555;transform:rotate(90deg);transform-origin:0 0;">2</div>
<div class="t" style="left:17px;top:370.0px;font-size:7.5px;color:#555;transform:rotate(90deg);transform-origin:0 0;">3</div>
<div class="t" style="left:17px;top:400.2px;font-size:7.5px;color:#555;transform:rotate(90deg);transform-origin:0 0;">4</div>
<div class="t" style="left:17px;top:430.4px;font-size:7.5px;color:#555;transform:rotate(90deg);transform-origin:0 0;">5</div>
<div class="t" style="left:17px;top:460.6px;font-size:7.5px;color:#555;transform:rotate(90deg);transform-origin:0 0;">6</div>
<div class="t" style="left:17px;top:490.8px;font-size:7.5px;color:#555;transform:rotate(90deg);transform-origin:0 0;">7</div>
<div class="t" style="left:17px;top:521.1px;font-size:7.5px;color:#555;transform:rotate(90deg);transform-origin:0 0;">8</div>
<div class="t" style="left:17px;top:551.3px;font-size:7.5px;color:#555;transform:rotate(90deg);transform-origin:0 0;">9</div>
<div class="t" style="left:17px;top:581.5px;font-size:7.5px;color:#555;transform:rotate(90deg);transform-origin:0 0;">10</div>
<div class="t" style="left:17px;top:611.7px;font-size:7.5px;color:#555;transform:rotate(90deg);transform-origin:0 0;">11</div>
<div class="t" style="left:17px;top:641.9px;font-size:7.5px;color:#555;transform:rotate(90deg);transform-origin:0 0;">12</div>
<div class="t" style="left:17px;top:672.2px;font-size:7.5px;color:#555;transform:rotate(90deg);transform-origin:0 0;">13</div>
<div class="t" style="left:17px;top:702.4px;font-size:7.5px;color:#555;transform:rotate(90deg);transform-origin:0 0;">14</div>
<div class="t" style="left:17px;top:732.6px;font-size:7.5px;color:#555;transform:rotate(90deg);transform-origin:0 0;">15</div>
<div class="t" style="left:17px;top:762.8px;font-size:7.5px;color:#555;transform:rotate(90deg);transform-origin:0 0;">16</div>
<div class="a" style="left:66.5px;top:218.6px;width:623px;height:556.9px;background:#ffffff;border:1px solid #d9d9d9;border-bottom:none;"></div>
<div class="a" style="left:696px;top:218.6px;width:623px;height:556.9px;background:#efefef;border:1px solid #d6d6d6;border-bottom:none;"></div>
<div class="a" style="left:1326px;top:218.6px;width:200px;height:556.9px;background:#efefef;border:1px solid #d6d6d6;border-bottom:none;"></div>
<div class="a" style="left:1486px;top:150px;width:14px;height:626px;background:#e6e6e6;"></div>
<div class="a" style="left:119.0px;top:187.3px;width:471.30999999999995px;height:15.4px;background:#e6e6e6;border-bottom:1px solid #ababab;"></div>
<div class="a" style="left:119.0px;top:187.3px;width:1px;height:15px;background:#c6c6c6"></div><div class="a" style="left:186.3px;top:187.3px;width:1px;height:15px;background:#c6c6c6"></div><div class="a" style="left:253.7px;top:187.3px;width:1px;height:15px;background:#c6c6c6"></div><div class="a" style="left:321.0px;top:187.3px;width:1px;height:15px;background:#c6c6c6"></div><div class="a" style="left:388.3px;top:187.3px;width:1px;height:15px;background:#c6c6c6"></div><div class="a" style="left:455.6px;top:187.3px;width:1px;height:15px;background:#c6c6c6"></div><div class="a" style="left:523.0px;top:187.3px;width:1px;height:15px;background:#c6c6c6"></div><div class="a" style="left:589.3px;top:187.3px;width:1px;height:15px;background:#c6c6c6"></div>
<div class="a" style="left:119.0px;top:187.3px;width:67.33px;height:15.4px;background:#d2d2d2;border-bottom:2px solid #217346;"></div>
<div class="a" style="left:748.3px;top:187.3px;width:471.30999999999995px;height:15.4px;background:#e6e6e6;border-bottom:1px solid #ababab;"></div>
<div class="a" style="left:748.3px;top:187.3px;width:1px;height:15px;background:#c6c6c6"></div><div class="a" style="left:815.6px;top:187.3px;width:1px;height:15px;background:#c6c6c6"></div><div class="a" style="left:883.0px;top:187.3px;width:1px;height:15px;background:#c6c6c6"></div><div class="a" style="left:950.3px;top:187.3px;width:1px;height:15px;background:#c6c6c6"></div><div class="a" style="left:1017.6px;top:187.3px;width:1px;height:15px;background:#c6c6c6"></div><div class="a" style="left:1084.9px;top:187.3px;width:1px;height:15px;background:#c6c6c6"></div><div class="a" style="left:1152.3px;top:187.3px;width:1px;height:15px;background:#c6c6c6"></div><div class="a" style="left:1218.6px;top:187.3px;width:1px;height:15px;background:#c6c6c6"></div>
<div class="a" style="left:1378px;top:187.3px;width:108px;height:15.4px;background:#e6e6e6;border-bottom:1px solid #ababab;"></div>
<div class="a" style="left:1378.0px;top:187.3px;width:1px;height:15px;background:#c6c6c6"></div><div class="a" style="left:1445.3px;top:187.3px;width:1px;height:15px;background:#c6c6c6"></div><div class="a" style="left:1485.0px;top:187.3px;width:1px;height:15px;background:#c6c6c6"></div>
<div class="t" style="left:149.26px;top:190.14px;font-size:9.4px;color:#217346;transform:scaleX(0.9714);transform-origin:0 0;-webkit-text-stroke-width:0.35px;">A</div>
<div class="t" style="left:217.04px;top:190.14px;font-size:9.4px;color:#262626;transform:scaleX(0.9833);transform-origin:0 0;-webkit-text-stroke-width:0.35px;">B</div>
<div class="t" style="left:284.18px;top:190.14px;font-size:9.4px;color:#262626;transform:scaleX(0.9000);transform-origin:0 0;-webkit-text-stroke-width:0.35px;">C</div>
<div class="t" style="left:351.26px;top:190.14px;font-size:9.4px;color:#262626;transform:scaleX(0.9714);transform-origin:0 0;-webkit-text-stroke-width:0.35px;">D</div>
<div class="t" style="left:419.38px;top:190.14px;font-size:9.4px;color:#262626;transform:scaleX(0.8667);transform-origin:0 0;-webkit-text-stroke-width:0.35px;">E</div>
<div class="t" style="left:486.92px;top:190.14px;font-size:9.4px;color:#262626;transform:scaleX(0.8000);transform-origin:0 0;-webkit-text-stroke-width:0.35px;">F</div>
<div class="t" style="left:553.25px;top:190.14px;font-size:9.4px;color:#262626;transform:scaleX(0.9714);transform-origin:0 0;-webkit-text-stroke-width:0.35px;">G</div>
<div class="t" style="left:778.56px;top:190.14px;font-size:9.4px;color:#262626;transform:scaleX(1.1333);transform-origin:0 0;-webkit-text-stroke-width:0.35px;">H</div>
<div class="t" style="left:848.39px;top:190.14px;font-size:9.4px;color:#262626;transform:scaleX(0.9000);transform-origin:0 0;-webkit-text-stroke-width:0.35px;">I</div>
<div class="t" style="left:914.37px;top:190.14px;font-size:9.4px;color:#262626;transform:scaleX(1.1250);transform-origin:0 0;-webkit-text-stroke-width:0.35px;">J</div>
<div class="t" style="left:980.80px;top:190.14px;font-size:9.4px;color:#262626;transform:scaleX(0.9000);transform-origin:0 0;-webkit-text-stroke-width:0.35px;">K</div>
<div class="t" style="left:1048.78px;top:190.14px;font-size:9.4px;color:#262626;-webkit-text-stroke-width:0.35px;">L</div>
<div class="t" style="left:1114.46px;top:190.14px;font-size:9.4px;color:#262626;transform:scaleX(1.0375);transform-origin:0 0;-webkit-text-stroke-width:0.35px;">M</div>
<div class="t" style="left:1182.54px;top:190.14px;font-size:9.4px;color:#262626;transform:scaleX(1.1333);transform-origin:0 0;-webkit-text-stroke-width:0.35px;">N</div>
<div class="t" style="left:1408.01px;top:190.14px;font-size:9.4px;color:#262626;transform:scaleX(1.0429);transform-origin:0 0;-webkit-text-stroke-width:0.35px;">O</div>
<div class="t" style="left:1476.14px;top:190.14px;font-size:9.4px;color:#262626;transform:scaleX(0.9500);transform-origin:0 0;-webkit-text-stroke-width:0.35px;">P</div>
<div class="a" style="left:31px;top:274.8px;width:20px;height:500.7px;background:#e6e6e6;border-right:1px solid #ababab;"></div>
<div class="a" style="left:31px;top:274.8px;width:20px;height:15.67px;background:#d2d2d2;border-right:2px solid #217346;"></div>
<div class="a" style="left:31px;top:290.47px;width:19px;height:1px;background:#c6c6c6"></div><div class="a" style="left:31px;top:306.14px;width:19px;height:1px;background:#c6c6c6"></div><div class="a" style="left:31px;top:321.81px;width:19px;height:1px;background:#c6c6c6"></div><div class="a" style="left:31px;top:337.48px;width:19px;height:1px;background:#c6c6c6"></div><div class="a" style="left:31px;top:353.15px;width:19px;height:1px;background:#c6c6c6"></div><div class="a" style="left:31px;top:368.82px;width:19px;height:1px;background:#c6c6c6"></div><div class="a" style="left:31px;top:384.49px;width:19px;height:1px;background:#c6c6c6"></div><div class="a" style="left:31px;top:400.16px;width:19px;height:1px;background:#c6c6c6"></div><div class="a" style="left:31px;top:415.83px;width:19px;height:1px;background:#c6c6c6"></div><div class="a" style="left:31px;top:431.50px;width:19px;height:1px;background:#c6c6c6"></div><div class="a" style="left:31px;top:447.17px;width:19px;height:1px;background:#c6c6c6"></div><div class="a" style="left:31px;top:462.84px;width:19px;height:1px;background:#c6c6c6"></div><div class="a" style="left:31px;top:478.51px;width:19px;height:1px;background:#c6c6c6"></div><div class="a" style="left:31px;top:494.18px;width:19px;height:1px;background:#c6c6c6"></div><div class="a" style="left:31px;top:509.85px;width:19px;height:1px;background:#c6c6c6"></div><div class="a" style="left:31px;top:525.52px;width:19px;height:1px;background:#c6c6c6"></div><div class="a" style="left:31px;top:541.19px;width:19px;height:1px;background:#c6c6c6"></div><div class="a" style="left:31px;top:556.86px;width:19px;height:1px;background:#c6c6c6"></div><div class="a" style="left:31px;top:572.53px;width:19px;height:1px;background:#c6c6c6"></div><div class="a" style="left:31px;top:588.20px;width:19px;height:1px;background:#c6c6c6"></div><div class="a" style="left:31px;top:603.87px;width:19px;height:1px;background:#c6c6c6"></div><div class="a" style="left:31px;top:619.54px;width:19px;height:1px;background:#c6c6c6"></div><div class="a" style="left:31px;top:635.21px;width:19px;height:1px;background:#c6c6c6"></div><div class="a" style="left:31px;top:650.88px;width:19px;height:1px;background:#c6c6c6"></div><div class="a" style="left:31px;top:666.55px;width:19px;height:1px;background:#c6c6c6"></div><div class="a" style="left:31px;top:682.22px;width:19px;height:1px;background:#c6c6c6"></div><div class="a" style="left:31px;top:697.89px;width:19px;height:1px;background:#c6c6c6"></div><div class="a" style="left:31px;top:713.56px;width:19px;height:1px;background:#c6c6c6"></div><div class="a" style="left:31px;top:729.23px;width:19px;height:1px;background:#c6c6c6"></div><div class="a" style="left:31px;top:744.90px;width:19px;height:1px;background:#c6c6c6"></div><div class="a" style="left:31px;top:760.57px;width:19px;height:1px;background:#c6c6c6"></div><div class="a" style="left:31px;top:776.24px;width:19px;height:1px;background:#c6c6c6"></div>
<div class="t" style="left:38.85px;top:279.14px;font-size:9.8px;color:#217346;transform:scaleX(0.6600);transform-origin:0 0;-webkit-text-stroke-width:0.25px;">1</div>
<div class="t" style="left:37.75px;top:294.81px;font-size:9.8px;color:#262626;transform:scaleX(1.1000);transform-origin:0 0;-webkit-text-stroke-width:0.25px;">2</div>
<div class="t" style="left:37.75px;top:310.48px;font-size:9.8px;color:#262626;transform:scaleX(0.9167);transform-origin:0 0;-webkit-text-stroke-width:0.25px;">3</div>
<div class="t" style="left:37.75px;top:326.15px;font-size:9.8px;color:#262626;transform:scaleX(0.9167);transform-origin:0 0;-webkit-text-stroke-width:0.25px;">4</div>
<div class="t" style="left:37.75px;top:341.82px;font-size:9.8px;color:#262626;transform:scaleX(0.9167);transform-origin:0 0;-webkit-text-stroke-width:0.25px;">5</div>
<div class="t" style="left:37.75px;top:357.49px;font-size:9.8px;color:#262626;transform:scaleX(0.9167);transform-origin:0 0;-webkit-text-stroke-width:0.25px;">6</div>
<div class="t" style="left:37.75px;top:373.16px;font-size:9.8px;color:#262626;transform:scaleX(1.1000);transform-origin:0 0;-webkit-text-stroke-width:0.25px;">7</div>
<div class="t" style="left:37.75px;top:388.83px;font-size:9.8px;color:#262626;transform:scaleX(0.9167);transform-origin:0 0;-webkit-text-stroke-width:0.25px;">8</div>
<div class="t" style="left:37.75px;top:404.50px;font-size:9.8px;color:#262626;transform:scaleX(1.1000);transform-origin:0 0;-webkit-text-stroke-width:0.25px;">9</div>
<div class="t" style="left:35.00px;top:420.17px;font-size:9.8px;color:#262626;transform:scaleX(0.9608);transform-origin:0 0;-webkit-text-stroke-width:0.25px;">10</div>
<div class="t" style="left:36.50px;top:435.84px;font-size:9.8px;color:#262626;transform:scaleX(0.8229);transform-origin:0 0;-webkit-text-stroke-width:0.25px;">11</div>
<div class="t" style="left:35.00px;top:451.51px;font-size:9.8px;color:#262626;transform:scaleX(1.0528);transform-origin:0 0;-webkit-text-stroke-width:0.25px;">12</div>
<div class="t" style="left:35.00px;top:467.18px;font-size:9.8px;color:#262626;transform:scaleX(0.9608);transform-origin:0 0;-webkit-text-stroke-width:0.25px;">13</div>
<div class="t" style="left:35.00px;top:482.85px;font-size:9.8px;color:#262626;transform:scaleX(0.9608);transform-origin:0 0;-webkit-text-stroke-width:0.25px;">14</div>
<div class="t" style="left:35.00px;top:498.52px;font-size:9.8px;color:#262626;transform:scaleX(0.9608);transform-origin:0 0;-webkit-text-stroke-width:0.25px;">15</div>
<div class="t" style="left:35.00px;top:514.19px;font-size:9.8px;color:#262626;transform:scaleX(0.9608);transform-origin:0 0;-webkit-text-stroke-width:0.25px;">16</div>
<div class="t" style="left:35.00px;top:529.86px;font-size:9.8px;color:#262626;transform:scaleX(1.0528);transform-origin:0 0;-webkit-text-stroke-width:0.25px;">17</div>
<div class="t" style="left:35.00px;top:545.53px;font-size:9.8px;color:#262626;transform:scaleX(0.9608);transform-origin:0 0;-webkit-text-stroke-width:0.25px;">18</div>
<div class="t" style="left:35.00px;top:561.20px;font-size:9.8px;color:#262626;transform:scaleX(1.0528);transform-origin:0 0;-webkit-text-stroke-width:0.25px;">19</div>
<div class="t" style="left:35.00px;top:576.87px;font-size:9.8px;color:#262626;transform:scaleX(0.9608);transform-origin:0 0;-webkit-text-stroke-width:0.25px;">20</div>
<div class="t" style="left:35.00px;top:592.54px;font-size:9.8px;color:#262626;transform:scaleX(1.0528);transform-origin:0 0;-webkit-text-stroke-width:0.25px;">21</div>
<div class="t" style="left:35.00px;top:608.21px;font-size:9.8px;color:#262626;transform:scaleX(1.0528);transform-origin:0 0;-webkit-text-stroke-width:0.25px;">22</div>
<div class="t" style="left:35.00px;top:623.88px;font-size:9.8px;color:#262626;transform:scaleX(0.9608);transform-origin:0 0;-webkit-text-stroke-width:0.25px;">23</div>
<div class="t" style="left:35.00px;top:639.55px;font-size:9.8px;color:#262626;transform:scaleX(0.9608);transform-origin:0 0;-webkit-text-stroke-width:0.25px;">24</div>
<div class="t" style="left:35.00px;top:655.22px;font-size:9.8px;color:#262626;transform:scaleX(0.9608);transform-origin:0 0;-webkit-text-stroke-width:0.25px;">25</div>
<div class="t" style="left:35.00px;top:670.89px;font-size:9.8px;color:#262626;transform:scaleX(0.9608);transform-origin:0 0;-webkit-text-stroke-width:0.25px;">26</div>
<div class="t" style="left:35.00px;top:686.56px;font-size:9.8px;color:#262626;transform:scaleX(1.0528);transform-origin:0 0;-webkit-text-stroke-width:0.25px;">27</div>
<div class="t" style="left:35.00px;top:702.23px;font-size:9.8px;color:#262626;transform:scaleX(0.9608);transform-origin:0 0;-webkit-text-stroke-width:0.25px;">28</div>
<div class="t" style="left:35.00px;top:717.90px;font-size:9.8px;color:#262626;transform:scaleX(1.0528);transform-origin:0 0;-webkit-text-stroke-width:0.25px;">29</div>
<div class="t" style="left:35.00px;top:733.57px;font-size:9.8px;color:#262626;transform:scaleX(0.9608);transform-origin:0 0;-webkit-text-stroke-width:0.25px;">30</div>
<div class="t" style="left:35.00px;top:749.24px;font-size:9.8px;color:#262626;transform:scaleX(1.0528);transform-origin:0 0;-webkit-text-stroke-width:0.25px;">31</div>
<div class="t" style="left:35.00px;top:764.91px;font-size:9.8px;color:#262626;transform:scaleX(1.0528);transform-origin:0 0;-webkit-text-stroke-width:0.25px;">32</div>
<div class="a" style="left:119.0px;top:274.80px;width:471.3px;height:1px;background:#d9d9d9"></div><div class="a" style="left:119.0px;top:290.47px;width:471.3px;height:1px;background:#d9d9d9"></div><div class="a" style="left:119.0px;top:306.14px;width:471.3px;height:1px;background:#d9d9d9"></div><div class="a" style="left:119.0px;top:321.81px;width:471.3px;height:1px;background:#d9d9d9"></div><div class="a" style="left:119.0px;top:337.48px;width:471.3px;height:1px;background:#d9d9d9"></div><div class="a" style="left:119.0px;top:353.15px;width:471.3px;height:1px;background:#d9d9d9"></div><div class="a" style="left:119.0px;top:368.82px;width:471.3px;height:1px;background:#d9d9d9"></div><div class="a" style="left:119.0px;top:384.49px;width:471.3px;height:1px;background:#d9d9d9"></div><div class="a" style="left:119.0px;top:400.16px;width:471.3px;height:1px;background:#d9d9d9"></div><div class="a" style="left:119.0px;top:415.83px;width:471.3px;height:1px;background:#d9d9d9"></div><div class="a" style="left:119.0px;top:431.50px;width:471.3px;height:1px;background:#d9d9d9"></div><div class="a" style="left:119.0px;top:447.17px;width:471.3px;height:1px;background:#d9d9d9"></div><div class="a" style="left:119.0px;top:462.84px;width:471.3px;height:1px;background:#d9d9d9"></div><div class="a" style="left:119.0px;top:478.51px;width:471.3px;height:1px;background:#d9d9d9"></div><div class="a" style="left:119.0px;top:494.18px;width:471.3px;height:1px;background:#d9d9d9"></div><div class="a" style="left:119.0px;top:509.85px;width:471.3px;height:1px;background:#d9d9d9"></div><div class="a" style="left:119.0px;top:525.52px;width:471.3px;height:1px;background:#d9d9d9"></div><div class="a" style="left:119.0px;top:541.19px;width:471.3px;height:1px;background:#d9d9d9"></div><div class="a" style="left:119.0px;top:556.86px;width:471.3px;height:1px;background:#d9d9d9"></div><div class="a" style="left:119.0px;top:572.53px;width:471.3px;height:1px;background:#d9d9d9"></div><div class="a" style="left:119.0px;top:588.20px;width:471.3px;height:1px;background:#d9d9d9"></div><div class="a" style="left:119.0px;top:603.87px;width:471.3px;height:1px;background:#d9d9d9"></div><div class="a" style="left:119.0px;top:619.54px;width:471.3px;height:1px;background:#d9d9d9"></div><div class="a" style="left:119.0px;top:635.21px;width:471.3px;height:1px;background:#d9d9d9"></div><div class="a" style="left:119.0px;top:650.88px;width:471.3px;height:1px;background:#d9d9d9"></div><div class="a" style="left:119.0px;top:666.55px;width:471.3px;height:1px;background:#d9d9d9"></div><div class="a" style="left:119.0px;top:682.22px;width:471.3px;height:1px;background:#d9d9d9"></div><div class="a" style="left:119.0px;top:697.89px;width:471.3px;height:1px;background:#d9d9d9"></div><div class="a" style="left:119.0px;top:713.56px;width:471.3px;height:1px;background:#d9d9d9"></div><div class="a" style="left:119.0px;top:729.23px;width:471.3px;height:1px;background:#d9d9d9"></div><div class="a" style="left:119.0px;top:744.90px;width:471.3px;height:1px;background:#d9d9d9"></div><div class="a" style="left:119.0px;top:760.57px;width:471.3px;height:1px;background:#d9d9d9"></div><div class="a" style="left:119.0px;top:776.24px;width:471.3px;height:1px;background:#d9d9d9"></div><div class="a" style="left:119.0px;top:274.80px;width:1px;height:500.7px;background:#d9d9d9"></div><div class="a" style="left:186.3px;top:274.80px;width:1px;height:500.7px;background:#d9d9d9"></div><div class="a" style="left:253.7px;top:274.80px;width:1px;height:500.7px;background:#d9d9d9"></div><div class="a" style="left:321.0px;top:274.80px;width:1px;height:500.7px;background:#d9d9d9"></div><div class="a" style="left:388.3px;top:274.80px;width:1px;height:500.7px;background:#d9d9d9"></div><div class="a" style="left:455.6px;top:274.80px;width:1px;height:500.7px;background:#d9d9d9"></div><div class="a" style="left:523.0px;top:274.80px;width:1px;height:500.7px;background:#d9d9d9"></div><div class="a" style="left:590.3px;top:274.80px;width:1px;height:500.7px;background:#d9d9d9"></div>
<div class="t" style="left:120.70px;top:231.07px;font-size:9.6px;color:#595959;transform:scaleX(0.9225);transform-origin:0 0;">Encabezado</div>
<div class="a" style="left:291px;top:241.9px;width:174px;height:32px;background:transparent;border:1px solid #c8c8c8;border-left:none;"></div>
<div class="a" style="left:465px;top:241.9px;width:160px;height:32px;background:transparent;border:1px solid #c8c8c8;border-left:none;"></div>
<div class="a" style="left:119px;top:241.9px;width:172.5px;height:32.3px;background:transparent;border:2px solid #7a7a7a;"></div>
<div class="a" style="left:120.5px;top:244px;width:1px;height:15px;background:#222;"></div>
<div class="a" style="left:118.4px;top:274.2px;width:69.4px;height:17.4px;background:transparent;border:2px solid #217346;"></div>
<div class="a" style="left:185px;top:289px;width:4.5px;height:4.5px;background:#217346;border:1px solid #fff;"></div>
<div class="a" style="left:748.3px;top:274.80px;width:471.3px;height:1px;background:#dadada;box-shadow:0 1px 0 #f8f8f8,0 -1px 0 #f8f8f8"></div><div class="a" style="left:748.3px;top:290.47px;width:471.3px;height:1px;background:#dadada;box-shadow:0 1px 0 #f8f8f8,0 -1px 0 #f8f8f8"></div><div class="a" style="left:748.3px;top:306.14px;width:471.3px;height:1px;background:#dadada;box-shadow:0 1px 0 #f8f8f8,0 -1px 0 #f8f8f8"></div><div class="a" style="left:748.3px;top:321.81px;width:471.3px;height:1px;background:#dadada;box-shadow:0 1px 0 #f8f8f8,0 -1px 0 #f8f8f8"></div><div class="a" style="left:748.3px;top:337.48px;width:471.3px;height:1px;background:#dadada;box-shadow:0 1px 0 #f8f8f8,0 -1px 0 #f8f8f8"></div><div class="a" style="left:748.3px;top:353.15px;width:471.3px;height:1px;background:#dadada;box-shadow:0 1px 0 #f8f8f8,0 -1px 0 #f8f8f8"></div><div class="a" style="left:748.3px;top:368.82px;width:471.3px;height:1px;background:#dadada;box-shadow:0 1px 0 #f8f8f8,0 -1px 0 #f8f8f8"></div><div class="a" style="left:748.3px;top:384.49px;width:471.3px;height:1px;background:#dadada;box-shadow:0 1px 0 #f8f8f8,0 -1px 0 #f8f8f8"></div><div class="a" style="left:748.3px;top:400.16px;width:471.3px;height:1px;background:#dadada;box-shadow:0 1px 0 #f8f8f8,0 -1px 0 #f8f8f8"></div><div class="a" style="left:748.3px;top:415.83px;width:471.3px;height:1px;background:#dadada;box-shadow:0 1px 0 #f8f8f8,0 -1px 0 #f8f8f8"></div><div class="a" style="left:748.3px;top:431.50px;width:471.3px;height:1px;background:#dadada;box-shadow:0 1px 0 #f8f8f8,0 -1px 0 #f8f8f8"></div><div class="a" style="left:748.3px;top:447.17px;width:471.3px;height:1px;background:#dadada;box-shadow:0 1px 0 #f8f8f8,0 -1px 0 #f8f8f8"></div><div class="a" style="left:748.3px;top:462.84px;width:471.3px;height:1px;background:#dadada;box-shadow:0 1px 0 #f8f8f8,0 -1px 0 #f8f8f8"></div><div class="a" style="left:748.3px;top:478.51px;width:471.3px;height:1px;background:#dadada;box-shadow:0 1px 0 #f8f8f8,0 -1px 0 #f8f8f8"></div><div class="a" style="left:748.3px;top:494.18px;width:471.3px;height:1px;background:#dadada;box-shadow:0 1px 0 #f8f8f8,0 -1px 0 #f8f8f8"></div><div class="a" style="left:748.3px;top:509.85px;width:471.3px;height:1px;background:#dadada;box-shadow:0 1px 0 #f8f8f8,0 -1px 0 #f8f8f8"></div><div class="a" style="left:748.3px;top:525.52px;width:471.3px;height:1px;background:#dadada;box-shadow:0 1px 0 #f8f8f8,0 -1px 0 #f8f8f8"></div><div class="a" style="left:748.3px;top:541.19px;width:471.3px;height:1px;background:#dadada;box-shadow:0 1px 0 #f8f8f8,0 -1px 0 #f8f8f8"></div><div class="a" style="left:748.3px;top:556.86px;width:471.3px;height:1px;background:#dadada;box-shadow:0 1px 0 #f8f8f8,0 -1px 0 #f8f8f8"></div><div class="a" style="left:748.3px;top:572.53px;width:471.3px;height:1px;background:#dadada;box-shadow:0 1px 0 #f8f8f8,0 -1px 0 #f8f8f8"></div><div class="a" style="left:748.3px;top:588.20px;width:471.3px;height:1px;background:#dadada;box-shadow:0 1px 0 #f8f8f8,0 -1px 0 #f8f8f8"></div><div class="a" style="left:748.3px;top:603.87px;width:471.3px;height:1px;background:#dadada;box-shadow:0 1px 0 #f8f8f8,0 -1px 0 #f8f8f8"></div><div class="a" style="left:748.3px;top:619.54px;width:471.3px;height:1px;background:#dadada;box-shadow:0 1px 0 #f8f8f8,0 -1px 0 #f8f8f8"></div><div class="a" style="left:748.3px;top:635.21px;width:471.3px;height:1px;background:#dadada;box-shadow:0 1px 0 #f8f8f8,0 -1px 0 #f8f8f8"></div><div class="a" style="left:748.3px;top:650.88px;width:471.3px;height:1px;background:#dadada;box-shadow:0 1px 0 #f8f8f8,0 -1px 0 #f8f8f8"></div><div class="a" style="left:748.3px;top:666.55px;width:471.3px;height:1px;background:#dadada;box-shadow:0 1px 0 #f8f8f8,0 -1px 0 #f8f8f8"></div><div class="a" style="left:748.3px;top:682.22px;width:471.3px;height:1px;background:#dadada;box-shadow:0 1px 0 #f8f8f8,0 -1px 0 #f8f8f8"></div><div class="a" style="left:748.3px;top:697.89px;width:471.3px;height:1px;background:#dadada;box-shadow:0 1px 0 #f8f8f8,0 -1px 0 #f8f8f8"></div><div class="a" style="left:748.3px;top:713.56px;width:471.3px;height:1px;background:#dadada;box-shadow:0 1px 0 #f8f8f8,0 -1px 0 #f8f8f8"></div><div class="a" style="left:748.3px;top:729.23px;width:471.3px;height:1px;background:#dadada;box-shadow:0 1px 0 #f8f8f8,0 -1px 0 #f8f8f8"></div><div class="a" style="left:748.3px;top:744.90px;width:471.3px;height:1px;background:#dadada;box-shadow:0 1px 0 #f8f8f8,0 -1px 0 #f8f8f8"></div><div class="a" style="left:748.3px;top:760.57px;width:471.3px;height:1px;background:#dadada;box-shadow:0 1px 0 #f8f8f8,0 -1px 0 #f8f8f8"></div><div class="a" style="left:748.3px;top:776.24px;width:471.3px;height:1px;background:#dadada;box-shadow:0 1px 0 #f8f8f8,0 -1px 0 #f8f8f8"></div><div class="a" style="left:748.3px;top:274.80px;width:1px;height:500.7px;background:#dadada;box-shadow:1px 0 0 #f8f8f8,-1px 0 0 #f8f8f8"></div><div class="a" style="left:815.6px;top:274.80px;width:1px;height:500.7px;background:#dadada;box-shadow:1px 0 0 #f8f8f8,-1px 0 0 #f8f8f8"></div><div class="a" style="left:883.0px;top:274.80px;width:1px;height:500.7px;background:#dadada;box-shadow:1px 0 0 #f8f8f8,-1px 0 0 #f8f8f8"></div><div class="a" style="left:950.3px;top:274.80px;width:1px;height:500.7px;background:#dadada;box-shadow:1px 0 0 #f8f8f8,-1px 0 0 #f8f8f8"></div><div class="a" style="left:1017.6px;top:274.80px;width:1px;height:500.7px;background:#dadada;box-shadow:1px 0 0 #f8f8f8,-1px 0 0 #f8f8f8"></div><div class="a" style="left:1084.9px;top:274.80px;width:1px;height:500.7px;background:#dadada;box-shadow:1px 0 0 #f8f8f8,-1px 0 0 #f8f8f8"></div><div class="a" style="left:1152.3px;top:274.80px;width:1px;height:500.7px;background:#dadada;box-shadow:1px 0 0 #f8f8f8,-1px 0 0 #f8f8f8"></div><div class="a" style="left:1219.6px;top:274.80px;width:1px;height:500.7px;background:#dadada;box-shadow:1px 0 0 #f8f8f8,-1px 0 0 #f8f8f8"></div>
<div class="a" style="left:1378.0px;top:274.80px;width:108.0px;height:1px;background:#dadada;box-shadow:0 1px 0 #f8f8f8,0 -1px 0 #f8f8f8"></div><div class="a" style="left:1378.0px;top:290.47px;width:108.0px;height:1px;background:#dadada;box-shadow:0 1px 0 #f8f8f8,0 -1px 0 #f8f8f8"></div><div class="a" style="left:1378.0px;top:306.14px;width:108.0px;height:1px;background:#dadada;box-shadow:0 1px 0 #f8f8f8,0 -1px 0 #f8f8f8"></div><div class="a" style="left:1378.0px;top:321.81px;width:108.0px;height:1px;background:#dadada;box-shadow:0 1px 0 #f8f8f8,0 -1px 0 #f8f8f8"></div><div class="a" style="left:1378.0px;top:337.48px;width:108.0px;height:1px;background:#dadada;box-shadow:0 1px 0 #f8f8f8,0 -1px 0 #f8f8f8"></div><div class="a" style="left:1378.0px;top:353.15px;width:108.0px;height:1px;background:#dadada;box-shadow:0 1px 0 #f8f8f8,0 -1px 0 #f8f8f8"></div><div class="a" style="left:1378.0px;top:368.82px;width:108.0px;height:1px;background:#dadada;box-shadow:0 1px 0 #f8f8f8,0 -1px 0 #f8f8f8"></div><div class="a" style="left:1378.0px;top:384.49px;width:108.0px;height:1px;background:#dadada;box-shadow:0 1px 0 #f8f8f8,0 -1px 0 #f8f8f8"></div><div class="a" style="left:1378.0px;top:400.16px;width:108.0px;height:1px;background:#dadada;box-shadow:0 1px 0 #f8f8f8,0 -1px 0 #f8f8f8"></div><div class="a" style="left:1378.0px;top:415.83px;width:108.0px;height:1px;background:#dadada;box-shadow:0 1px 0 #f8f8f8,0 -1px 0 #f8f8f8"></div><div class="a" style="left:1378.0px;top:431.50px;width:108.0px;height:1px;background:#dadada;box-shadow:0 1px 0 #f8f8f8,0 -1px 0 #f8f8f8"></div><div class="a" style="left:1378.0px;top:447.17px;width:108.0px;height:1px;background:#dadada;box-shadow:0 1px 0 #f8f8f8,0 -1px 0 #f8f8f8"></div><div class="a" style="left:1378.0px;top:462.84px;width:108.0px;height:1px;background:#dadada;box-shadow:0 1px 0 #f8f8f8,0 -1px 0 #f8f8f8"></div><div class="a" style="left:1378.0px;top:478.51px;width:108.0px;height:1px;background:#dadada;box-shadow:0 1px 0 #f8f8f8,0 -1px 0 #f8f8f8"></div><div class="a" style="left:1378.0px;top:494.18px;width:108.0px;height:1px;background:#dadada;box-shadow:0 1px 0 #f8f8f8,0 -1px 0 #f8f8f8"></div><div class="a" style="left:1378.0px;top:509.85px;width:108.0px;height:1px;background:#dadada;box-shadow:0 1px 0 #f8f8f8,0 -1px 0 #f8f8f8"></div><div class="a" style="left:1378.0px;top:525.52px;width:108.0px;height:1px;background:#dadada;box-shadow:0 1px 0 #f8f8f8,0 -1px 0 #f8f8f8"></div><div class="a" style="left:1378.0px;top:541.19px;width:108.0px;height:1px;background:#dadada;box-shadow:0 1px 0 #f8f8f8,0 -1px 0 #f8f8f8"></div><div class="a" style="left:1378.0px;top:556.86px;width:108.0px;height:1px;background:#dadada;box-shadow:0 1px 0 #f8f8f8,0 -1px 0 #f8f8f8"></div><div class="a" style="left:1378.0px;top:572.53px;width:108.0px;height:1px;background:#dadada;box-shadow:0 1px 0 #f8f8f8,0 -1px 0 #f8f8f8"></div><div class="a" style="left:1378.0px;top:588.20px;width:108.0px;height:1px;background:#dadada;box-shadow:0 1px 0 #f8f8f8,0 -1px 0 #f8f8f8"></div><div class="a" style="left:1378.0px;top:603.87px;width:108.0px;height:1px;background:#dadada;box-shadow:0 1px 0 #f8f8f8,0 -1px 0 #f8f8f8"></div><div class="a" style="left:1378.0px;top:619.54px;width:108.0px;height:1px;background:#dadada;box-shadow:0 1px 0 #f8f8f8,0 -1px 0 #f8f8f8"></div><div class="a" style="left:1378.0px;top:635.21px;width:108.0px;height:1px;background:#dadada;box-shadow:0 1px 0 #f8f8f8,0 -1px 0 #f8f8f8"></div><div class="a" style="left:1378.0px;top:650.88px;width:108.0px;height:1px;background:#dadada;box-shadow:0 1px 0 #f8f8f8,0 -1px 0 #f8f8f8"></div><div class="a" style="left:1378.0px;top:666.55px;width:108.0px;height:1px;background:#dadada;box-shadow:0 1px 0 #f8f8f8,0 -1px 0 #f8f8f8"></div><div class="a" style="left:1378.0px;top:682.22px;width:108.0px;height:1px;background:#dadada;box-shadow:0 1px 0 #f8f8f8,0 -1px 0 #f8f8f8"></div><div class="a" style="left:1378.0px;top:697.89px;width:108.0px;height:1px;background:#dadada;box-shadow:0 1px 0 #f8f8f8,0 -1px 0 #f8f8f8"></div><div class="a" style="left:1378.0px;top:713.56px;width:108.0px;height:1px;background:#dadada;box-shadow:0 1px 0 #f8f8f8,0 -1px 0 #f8f8f8"></div><div class="a" style="left:1378.0px;top:729.23px;width:108.0px;height:1px;background:#dadada;box-shadow:0 1px 0 #f8f8f8,0 -1px 0 #f8f8f8"></div><div class="a" style="left:1378.0px;top:744.90px;width:108.0px;height:1px;background:#dadada;box-shadow:0 1px 0 #f8f8f8,0 -1px 0 #f8f8f8"></div><div class="a" style="left:1378.0px;top:760.57px;width:108.0px;height:1px;background:#dadada;box-shadow:0 1px 0 #f8f8f8,0 -1px 0 #f8f8f8"></div><div class="a" style="left:1378.0px;top:776.24px;width:108.0px;height:1px;background:#dadada;box-shadow:0 1px 0 #f8f8f8,0 -1px 0 #f8f8f8"></div><div class="a" style="left:1378.0px;top:274.80px;width:1px;height:500.7px;background:#dadada;box-shadow:1px 0 0 #f8f8f8,-1px 0 0 #f8f8f8"></div><div class="a" style="left:1445.3px;top:274.80px;width:1px;height:500.7px;background:#dadada;box-shadow:1px 0 0 #f8f8f8,-1px 0 0 #f8f8f8"></div>
<div class="t" style="left:993.73px;top:251.92px;font-size:16.4px;color:#b0b0b0;transform:scaleX(0.9698);transform-origin:0 0;-webkit-text-stroke-width:0;">Encabezado</div>
<div class="a" style="left:1380px;top:280px;width:106px;height:30px;overflow:hidden">
<div class="t" style="left:8.13px;top:10.10px;font-size:15px;color:#b0b0b0;transform:scaleX(1.0655);transform-origin:0 0;-webkit-text-stroke-width:0;">Haga clic para</div>
</div>
<div class="a" style="left:479px;top:235px;width:546px;height:344.5px;background:#fff;border:1px solid #3f8a5f;box-shadow:1px 2px 5px rgba(0,0,0,0.22)"></div>
<svg class="s" style="left:1001.5px;top:243.5px;" width="9" height="9" viewBox="0 0 9 9"><path d="M0.5 0.5l8 8M8.5 0.5l-8 8" stroke="#333" stroke-width="1"/></svg>
<svg class="s" style="left:974.5px;top:265.3px;" width="16" height="16" viewBox="0 0 16 16"><g transform="translate(8 8)"><circle r="6.6" fill="none" stroke="#333" stroke-width="1.1"/><circle cx="-2.3" cy="-2" r="0.9" fill="#333"/><circle cx="2.3" cy="-2" r="0.9" fill="#333"/><path d="M-3.3 1.6q3.3 3.2 6.6 0" fill="none" stroke="#333" stroke-width="1.1"/></g></svg>
<svg class="s" style="left:1000.3px;top:265.3px;" width="16" height="16" viewBox="0 0 16 16"><g transform="translate(8 8)"><circle r="6.6" fill="none" stroke="#333" stroke-width="1.1"/><circle cx="-2.3" cy="-2" r="0.9" fill="#333"/><circle cx="2.3" cy="-2" r="0.9" fill="#333"/><path d="M-3.2 4q3.2 -3.2 6.4 0" fill="none" stroke="#333" stroke-width="1.1"/></g></svg>
<div class="t" style="left:535.05px;top:265.11px;font-size:19.6px;color:#3f8660;transform:scaleX(0.9485);transform-origin:0 0;-webkit-text-stroke-width:0;">Insertar imágenes</div>
<div class="a" style="left:536px;top:301.2px;width:432px;height:1px;background:#e8e8e8;"></div>
<div class="a" style="left:536px;top:350.7px;width:432px;height:1px;background:#e8e8e8;"></div>
<div class="a" style="left:536px;top:400.3px;width:432px;height:1px;background:#e8e8e8;"></div>
<div class="a" style="left:536px;top:449.5px;width:432px;height:1px;background:#e8e8e8;"></div>
<div class="t" style="left:570.40px;top:322.37px;font-size:11.5px;color:#4a4a4a;transform:scaleX(0.9944);transform-origin:0 0;-webkit-text-stroke-width:0.1px;">Desde un archivo</div>
<div class="t" style="left:570.20px;top:372.17px;font-size:11.5px;color:#4a4a4a;transform:scaleX(0.9930);transform-origin:0 0;-webkit-text-stroke-width:0.1px;">Búsqueda de imágenes de Bing</div>
<div class="t" style="left:570.20px;top:421.27px;font-size:11.5px;color:#4a4a4a;-webkit-text-stroke-width:0.1px;">OneDrive - Personal</div>
<div class="t" style="left:801.70px;top:322.54px;font-size:10px;color:#3b3b3b;transform:scaleX(0.8926);transform-origin:0 0;-webkit-text-stroke:0.35px #3b3b3b;">Examinar</div>
<svg class="s" style="left:846px;top:324.5px;" width="4" height="6" viewBox="0 0 4 6"><path d="M0.5 0.3L3.5 3 0.5 5.7z" fill="#444"/></svg>
<div class="t" style="left:801.70px;top:421.34px;font-size:10px;color:#3b3b3b;transform:scaleX(0.8926);transform-origin:0 0;-webkit-text-stroke:0.35px #3b3b3b;">Examinar</div>
<svg class="s" style="left:846px;top:423.3px;" width="4" height="6" viewBox="0 0 4 6"><path d="M0.5 0.3L3.5 3 0.5 5.7z" fill="#444"/></svg>
<div class="a" style="left:802px;top:366px;width:168px;height:21px;background:#fff;border:1px solid #d6d6d6;"></div>
<div class="t" style="left:806.70px;top:371.49px;font-size:11px;color:#555;transform:scaleX(0.9667);transform-origin:0 0;-webkit-text-stroke-width:0.1px;">Buscar en Bing</div>
<svg class="s" style="left:952px;top:371px;" width="9" height="9" viewBox="0 0 9 9"><circle cx="5.5" cy="3.5" r="2.8" fill="none" stroke="#b0b0b0" stroke-width="1"/><path d="M3.5 5.5L0.8 8.2" stroke="#b0b0b0" stroke-width="1.1"/></svg>
<svg class="s" style="left:0px;top:0px;left:0;top:0" width="1" height="1" viewBox="0 0 1 1"><defs><linearGradient id="scr" x1="0" y1="0" x2="0" y2="1"><stop offset="0" stop-color="#b9d6f2"/><stop offset="0.55" stop-color="#6f9bd6"/><stop offset="1" stop-color="#2a55b0"/></linearGradient></defs>
<path d="M535.8 320.8h4.6v9.8h-4.6z" fill="#d9d9d9" stroke="#b9b9b9" stroke-width="0.6"/>
<circle cx="537.2" cy="322.4" r="0.8" fill="#3aa55a"/>
<ellipse cx="547.5" cy="331.6" rx="5.8" ry="1.9" fill="#d3d3d3"/>
<path d="M546 328.5h3v2h-3z" fill="#c8c8c8"/>
<path d="M540.3 317.2L554.2 318.4 553.4 329.2 539.9 327.4z" fill="#eef2f7" stroke="#c0c8d2" stroke-width="0.6"/>
<path d="M547.6 318.9L553.3 319.4 552.6 328.4 548 328z" fill="url(#scr)"/>
<path d="M541.2 318.2L547.6 318.9 548 328 540.9 326.7z" fill="#1c2f8c"/></svg>
<svg class="s" style="left:539px;top:366.5px;" width="13" height="18" viewBox="0 0 13 18"><path d="M0.5 0.5L3.8 1.6V12.2L8.6 9.5 6.2 8.3 5 5.6 12.3 8.1V11.7L3.9 16.5 0.5 14.5z" fill="#1e7145"/></svg>
<svg class="s" style="left:0px;top:0px;left:0;top:0" width="1" height="1" viewBox="0 0 1 1"><path d="M535.6 428C534.6 425.3 536.2 423.3 538.3 423.1 538.9 420.4 541.6 419 543.6 419.8 545.3 417.4 549.3 417.6 550.3 420.6 L550 422.5 C548 421.8 545 422 543.2 424.5 540.8 424.8 540.2 427 540.6 429.3z" fill="#1b2c8c"/>
<path d="M541.3 429.9C539.9 428.9 540.3 425.9 542.8 425.5 543.4 422.8 546.4 421.6 548.4 422.8 549.9 421.4 552.4 422.2 552.9 424.3 554.9 425.2 555.2 428.6 553.6 429.9z" fill="#3d62b3" stroke="#fff" stroke-width="1.6"/>
<path d="M541.3 429.9C539.9 428.9 540.3 425.9 542.8 425.5 543.4 422.8 546.4 421.6 548.4 422.8 549.9 421.4 552.4 422.2 552.9 424.3 554.9 425.2 555.2 428.6 553.6 429.9z" fill="#3d62b3" stroke="#1b2c8c" stroke-width="0.9"/></svg>
<svg class="s" style="left:0;top:0" width="1" height="1" viewBox="0 0 1 1"></svg>
<svg class="s" style="left:620px;top:325px;" width="60" height="70" viewBox="0 0 60 70"><g transform="translate(-620 -325)"><path d="M638.1 333.8L667.6 350.5 658.2 354.4 668.1 380.5 648.9 387.9 639 362.3 628.2 365.3z" fill="rgba(0,0,0,0.12)" transform="translate(-2 2)" style="filter:blur(1.5px)"/><path d="M638.1 333.8L667.6 350.5 658.2 354.4 668.1 380.5 648.9 387.9 639 362.3 628.2 365.3z" fill="#f44646" stroke="#2e2e2e" stroke-width="1.6" stroke-linejoin="round"/></g></svg>
<div class="a" style="left:1489px;top:160.7px;width:10px;height:615px;background:#ffffff;border-left:1px solid #d2d2d2;"></div>
<div class="a" style="left:1489px;top:160.7px;width:10px;height:12px;background:#fff;border:1px solid #d2d2d2;border-right:none;"></div>
<svg class="s" style="left:1491px;top:164px;" width="7" height="5" viewBox="0 0 7 5"><path d="M0.5 4.5L3.5 0.8 6.5 4.5z" fill="#555"/></svg>
<div class="a" style="left:1490px;top:745px;width:9px;height:20px;background:#dcd8dd;"></div>
<div class="a" style="left:1489px;top:765px;width:10px;height:10.5px;background:#fff;border:1px solid #d2d2d2;border-right:none;"></div>
<svg class="s" style="left:1491px;top:768px;" width="7" height="5" viewBox="0 0 7 5"><path d="M0.5 0.5L3.5 4.2 6.5 0.5z" fill="#555"/></svg>
<div class="a" style="left:0px;top:775.5px;width:1500px;height:22px;background:#e6e6e6;border-top:1.5px solid #c2c2c2;"></div>
<svg class="s" style="left:20px;top:782px;" width="6" height="9" viewBox="0 0 6 9"><path d="M4.5 0.5L1 4.5 4.5 8.5" fill="none" stroke="#b9b9b9" stroke-width="1"/></svg>
<svg class="s" style="left:42px;top:782px;" width="6" height="9" viewBox="0 0 6 9"><path d="M1 0.5L4.5 4.5 1 8.5" fill="none" stroke="#b9b9b9" stroke-width="1"/></svg>
<div class="a" style="left:78.5px;top:778px;width:1px;height:16px;background:#a9a9a9;"></div>
<div class="t" style="left:88.30px;top:781.11px;font-size:10.5px;color:#444;transform:scaleX(0.9567);transform-origin:0 0;">Hoja1</div>
<div class="a" style="left:125.3px;top:775px;width:46.4px;height:20.5px;background:#ffffff;border-left:1px solid #bdbdbd;border-right:1px solid #bdbdbd;"></div>
<div class="a" style="left:125.3px;top:793.3px;width:46.4px;height:2px;background:#217346;"></div>
<div class="t" style="left:135.00px;top:780.91px;font-size:10.5px;color:#1d6b3e;font-weight:bold;transform:scaleX(0.9564);transform-origin:0 0;">Hoja2</div>
<svg class="s" style="left:197.5px;top:779.5px;" width="14" height="14" viewBox="0 0 14 14"><circle cx="7" cy="7" r="6" fill="none" stroke="#c4c4c4" stroke-width="1"/><path d="M7 3.8v6.4M3.8 7h6.4" stroke="#c4c4c4" stroke-width="1"/></svg>
<div class="a" style="left:902px;top:783.5px;width:1.2px;height:1.2px;background:#8d8d8d;"></div>
<div class="a" style="left:902px;top:786.5px;width:1.2px;height:1.2px;background:#8d8d8d;"></div>
<div class="a" style="left:902px;top:789.5px;width:1.2px;height:1.2px;background:#8d8d8d;"></div>
<div class="a" style="left:915.3px;top:781.3px;width:11.4px;height:11.3px;background:#fff;border:1px solid #bdbdbd;"></div>
<svg class="s" style="left:918px;top:783.5px;" width="6" height="7" viewBox="0 0 6 7"><path d="M4.5 0.5L1 3.5 4.5 6.5z" fill="#444"/></svg>
<div class="a" style="left:926.7px;top:781.3px;width:514px;height:11.3px;background:#fff;border:1px solid #bdbdbd;border-left:none;"></div>
<div class="a" style="left:1440.7px;top:781.3px;width:34.3px;height:11.3px;background:#e9e9e9;border-top:1px solid #d0d0d0;border-bottom:1px solid #d0d0d0;"></div>
<div class="a" style="left:1475px;top:781.3px;width:11.7px;height:11.3px;background:#fff;border:1px solid #d0d0d0;"></div>
<svg class="s" style="left:1478px;top:783.5px;" width="6" height="7" viewBox="0 0 6 7"><path d="M1.5 0.5L5 3.5 1.5 6.5z" fill="#666"/></svg>
<div class="a" style="left:0px;top:797.3px;width:1500px;height:15px;background:#f0f0f0;border-top:1px solid #dcdcdc;"></div>
<div class="t" style="left:5.80px;top:801.53px;font-size:10px;color:#333;transform:scaleX(0.8348);transform-origin:0 0;">Listo</div>
<svg class="s" style="left:40px;top:800.5px;" width="11" height="10.5" viewBox="0 0 11 10.5"><rect x="0.5" y="3" width="9.5" height="7" fill="none" stroke="#8a8a8a" stroke-width="1"/><path d="M3 4v6M5.5 4v6M8 4v6" stroke="#8a8a8a" stroke-width="0.9"/><circle cx="2.5" cy="2" r="1.8" fill="#777"/><rect x="5" y="0.5" width="5" height="1.3" fill="#777"/></svg>
<svg class="s" style="left:1278px;top:800px;" width="11" height="11" viewBox="0 0 11 11"><rect x="0.5" y="0.5" width="10" height="10" fill="none" stroke="#888"/><path d="M0.5 3.8h10M0.5 7.2h10M3.8 0.5v10M7.2 0.5v10" stroke="#888" stroke-width="0.9"/></svg>
<svg class="s" style="left:1309.5px;top:800px;" width="12" height="11" viewBox="0 0 12 11"><rect x="0.5" y="0.5" width="11" height="10" fill="none" stroke="#888"/><rect x="3" y="2" width="6" height="7" fill="none" stroke="#888"/><path d="M5 2v7M7 2v7" stroke="#888" stroke-width="0.6"/></svg>
<svg class="s" style="left:1340.5px;top:800px;" width="12" height="11" viewBox="0 0 12 11"><path d="M0.5 0.5v10h11V0.5M3 0.5v5h3v-5" fill="none" stroke="#888"/></svg>
<div class="a" style="left:1366.5px;top:805px;width:7px;height:1px;background:#9a9a9a;"></div>
<div class="a" style="left:1377px;top:805px;width:78px;height:1px;background:#c4c4c4;"></div>
<div class="a" style="left:1416.5px;top:802.5px;width:1px;height:5px;background:#9a9a9a;"></div>
<svg class="s" style="left:1459px;top:801.5px;" width="7" height="7" viewBox="0 0 7 7"><path d="M3.5 0v7M0 3.5h7" stroke="#b0b0b0" stroke-width="1"/></svg>
<div class="t" style="left:1476.70px;top:800.53px;font-size:10px;color:#b9b9b9;transform:scaleX(0.7904);transform-origin:0 0;">100%</div>
<svg class="s" style="left:0px;top:0px;left:0;top:0;pointer-events:none" width="1500" height="813" viewBox="0 0 1500 813"><circle cx="1470.1" cy="780.3" r="25.8" fill="rgba(255,255,255,0.45)" stroke="rgba(210,220,235,0.9)" stroke-width="1"/><path d="M1470.6 790.6 C1470.0 790.0 1468.7 787.9 1466.8 786.8 C1464.9 785.7 1461.4 785.3 1459.3 783.9 C1457.2 782.5 1455.1 780.7 1454.2 778.5 C1453.3 776.3 1453.2 773.4 1453.8 770.9 C1454.4 768.4 1455.4 765.3 1457.6 763.4 C1459.8 761.5 1463.7 760.1 1466.8 759.6 C1469.9 759.1 1473.4 759.3 1476.0 760.5 C1478.6 761.7 1481.3 764.4 1482.3 766.8 C1483.3 769.2 1482.5 772.7 1481.9 775.1 C1481.3 777.5 1479.5 778.9 1478.9 781.0 C1478.3 783.1 1479.3 785.3 1478.1 787.7 C1476.9 790.1 1471.7 794.2 1471.8 795.2 C1471.9 796.2 1476.4 794.1 1478.5 794.0 C1480.6 793.9 1483.8 794.0 1484.4 794.8 C1485.0 795.6 1483.7 797.3 1481.9 798.6 C1480.2 799.9 1475.2 802.0 1473.9 802.7" fill="none" stroke="#6a97d0" stroke-width="1.45" stroke-linecap="round" stroke-linejoin="round"/></svg>
<div class="a" style="left:0px;top:0px;width:1500px;height:1px;background:#222222;"></div>
<div class="a" style="left:0px;top:0px;width:1px;height:813px;background:#222222;"></div>
<div class="a" style="left:1499px;top:0px;width:1px;height:813px;background:#222222;"></div>
<div class="a" style="left:0px;top:812px;width:1500px;height:1px;background:#222222;"></div>
</div></body></html>
